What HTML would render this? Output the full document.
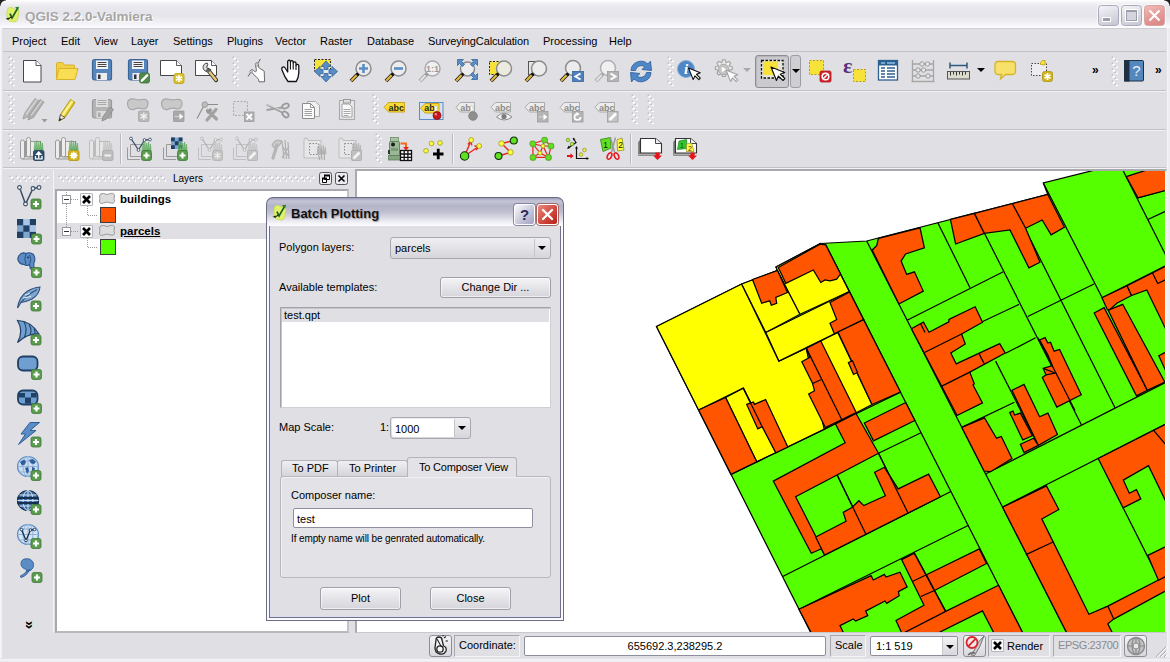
<!DOCTYPE html>
<html><head><meta charset="utf-8"><title>QGIS 2.2.0-Valmiera</title>
<style>
html,body{margin:0;padding:0;}
body{width:1170px;height:662px;overflow:hidden;background:#e0dfe3;font-family:"Liberation Sans",sans-serif;font-size:11px;color:#000;position:relative;}
.abs{position:absolute;}
div,span{box-sizing:border-box;}
#title{left:0;top:0;width:1170px;height:28px;background:linear-gradient(#ffffff 0px,#f6f6f9 2px,#e9e9ee 6px,#e4e4ea 15px,#ededf2 21px,#fbfbfd 27px);}
#title .t{left:25px;top:8.5px;font:bold 13.5px "Liberation Sans",sans-serif;color:#a6a6a6;letter-spacing:0px;text-shadow:1px 1px 0 #fff;white-space:nowrap;}
#corner{left:0;top:0;width:6px;height:6px;background:radial-gradient(circle at 6px 6px,rgba(0,0,0,0) 5px,#222 6px);}
#menubar{left:3px;top:28px;width:1163px;height:24px;background:#e1e0e4;border-top:1px solid #cfced4;border-bottom:1px solid #c2c1c7;}
.mi{position:absolute;top:35px;line-height:13px;white-space:nowrap;}
.sepH{position:absolute;left:3px;width:1163px;height:2px;border-top:1px solid #c2c1c7;border-bottom:1px solid #f2f2f5;}
.wbL{left:0;top:28px;width:3px;height:634px;background:linear-gradient(90deg,#f8f8fa,#eeeef2 2px,#d4d4da 3px);}
.wbR{left:1166px;top:28px;width:4px;height:634px;background:linear-gradient(90deg,#d0d0d6,#f4f4f7 1px,#ececf0);}
.wbB{left:0;top:658px;width:1170px;height:4px;background:linear-gradient(#d0d0d6,#f4f4f7 1px,#ececf0);}
.hv{position:absolute;width:7px;background-image:radial-gradient(circle at 2.6px 2.6px,#fff 0.9px,rgba(255,255,255,0) 1.5px),radial-gradient(circle at 5.6px 5.6px,#fff 0.9px,rgba(255,255,255,0) 1.5px),radial-gradient(circle at 1.5px 1.5px,#bdbcc4 0.7px,rgba(0,0,0,0) 1.3px),radial-gradient(circle at 4.5px 4.5px,#bdbcc4 0.7px,rgba(0,0,0,0) 1.3px);background-size:7px 6px;}
.hh{position:absolute;height:7px;background-image:radial-gradient(circle at 2.6px 2.6px,#fff 0.9px,rgba(255,255,255,0) 1.5px),radial-gradient(circle at 5.6px 5.6px,#fff 0.9px,rgba(255,255,255,0) 1.5px),radial-gradient(circle at 1.5px 1.5px,#bdbcc4 0.7px,rgba(0,0,0,0) 1.3px),radial-gradient(circle at 4.5px 4.5px,#bdbcc4 0.7px,rgba(0,0,0,0) 1.3px);background-size:6px 7px;}
.ic{position:absolute;width:24px;height:24px;overflow:visible;}
.vsep{position:absolute;width:2px;border-left:1px solid #b9b8c0;border-right:1px solid #f4f4f6;}
.more{position:absolute;font:bold 12px "Liberation Sans",sans-serif;line-height:12px;}
.arr{position:absolute;width:0;height:0;border-left:4px solid transparent;border-right:4px solid transparent;border-top:4px solid #000;}
#selbtn{left:755px;top:55px;width:34px;height:33px;border:1px solid #8e8d96;border-radius:3px;background:#cbcacf;box-shadow:inset 1px 1px 1px #b4b3ba;}
#selarr{left:790px;top:55px;width:11px;height:33px;border:1px solid #9d9ca4;border-radius:3px;background:#cfced3;}
/* layers dock */
#tree{left:55px;top:189px;width:294px;height:444px;background:#fff;border:2px solid #a9a9ad;border-right-color:#c3c3c7;border-bottom-color:#b9b9bd;}
#rowsel{left:57px;top:223px;width:291px;height:16px;background:#e0dfe3;}
.dockbtn{position:absolute;width:13px;height:13px;border:1px solid #55555c;border-radius:2.5px;background:#ebebef;}
.lname{position:absolute;font:bold 11.5px "Liberation Sans",sans-serif;white-space:nowrap;line-height:13px;}
.cb{position:absolute;width:13px;height:13px;border:1px solid #b5b4bc;background:#fbfbfc;border-radius:1px;}
.exp{position:absolute;width:9px;height:9px;border:1px solid #9b9aa3;background:#fff;}
.exp:after{content:"";position:absolute;left:1px;top:3px;width:5px;height:1px;background:#333;}
.sw{position:absolute;width:16px;height:16px;border:1px solid #3c3c3c;}
#mapframe{left:355px;top:169px;width:812px;height:464px;border:2px solid #a9a9ae;border-right:1px solid #f2f2f4;border-bottom:1px solid #c9c9cd;background:#fff;}
#map{position:absolute;left:357px;top:171px;}
#split{left:349px;top:188px;width:7px;height:444px;background:#e0dfe3;}
/* status bar */
.sframe{position:absolute;top:635px;height:22px;border:1px solid #a8a7ae;border-right-color:#f4f4f6;border-bottom-color:#f4f4f6;line-height:19px;white-space:nowrap;}
.sbtn{position:absolute;top:635px;height:22px;border:1px solid #8f8e96;border-radius:3px;background:linear-gradient(#f4f4f6,#d9d8de);}
.sedit{position:absolute;top:636px;height:20px;border:1px solid #8e8f9c;background:#fff;line-height:18px;white-space:nowrap;border-radius:2px;}
/* dialog */
#dlg{left:266px;top:197px;width:298px;height:424px;border-radius:7px 7px 0 0;background:#6c6c86;overflow:hidden;}
#dlgt{left:1px;top:1px;width:296px;height:28px;border-radius:6px 6px 0 0;background:linear-gradient(#9d9db8 0,#c5c5d6 3px,#b4b4c9 8px,#bfbfd1 14px,#dcdce6 20px,#f7f7fa 26px,#ffffff 28px);}
#dlgb{left:1px;top:29px;width:296px;height:394px;background:#fbfbff;}
#dlgi{left:2px;top:0;width:292px;height:392px;background:#e0dfe3;border:1px solid #707088;border-top:none;box-shadow:inset 1px 0 0 #dedef2,inset -1px 0 0 #dedef2,inset 0 -1px 0 #dedef2;}
#dlgt .t{left:24px;top:8px;font:bold 13px "Liberation Sans",sans-serif;color:#111;letter-spacing:0px;text-shadow:1px 1px 1px #9a9aa8;white-space:nowrap;}
.tb{position:absolute;top:6px;width:21px;height:21px;border-radius:3px;border:1px solid #fff;}
.lbl{position:absolute;white-space:nowrap;line-height:13px;}
.btn{position:absolute;border:1px solid #a09fa9;border-radius:3px;background:linear-gradient(#f5f5f7,#e6e5e9 45%,#d6d5db);text-align:center;box-shadow:inset 0 0 0 1px rgba(255,255,255,.6);}
.combo{position:absolute;border:1px solid #a9a8b0;border-radius:3px;background:linear-gradient(#efeef1,#e3e2e6 50%,#d6d5da);}
.sunk{position:absolute;border:1px solid #a3a2aa;border-right-color:#cfced4;border-bottom-color:#cfced4;background:#fff;box-shadow:inset 1px 1px 0 #c6c5cc;}
.tab{position:absolute;border:1px solid #b4b3bb;border-bottom:none;border-radius:3px 3px 0 0;}

</style></head>
<body>
<div id="title" class="abs"><div class="abs t">QGIS 2.2.0-Valmiera</div></div>
<div id="corner" class="abs"></div><div class="abs" style="right:0;top:0;width:6px;height:6px;background:radial-gradient(circle at 0 6px,rgba(0,0,0,0) 5px,#222 6px)"></div>
<svg class="abs" style="left:4px;top:5px" width="17" height="19" viewBox="2 1 19 22"><path d="M6,5 Q10,2 14,6 L17,4 L19,9 L17,19 Q14,22 10,20 Q9,21 7,19 Q4,14 5,9z" fill="#dff06a" stroke="#c4d84a" stroke-width="0.800"/><path d="M8.500,11 L11,16 L17,5.500" fill="none" stroke="#1f5f1f" stroke-width="2"/><path d="M14.500,3.500 l4.500,-0.500 l-1,4.500z" fill="#1f7f1f"/><path d="M3.500,17 l3.500,-1.500 l-0.500,3z" fill="#1f3f1f"/><path d="M6,17.500 L10,15" stroke="#111" stroke-width="1.200"/></svg>
<div class="abs" style="left:1098px;top:5px;width:21px;height:21px;border-radius:3.500px;border:1px solid #a9a9bd;background:linear-gradient(160deg,#f4f4f8,#dcdce4 50%,#c6c6d2);box-shadow:0 0 0 1px rgba(255,255,255,.7)"></div><div class="abs" style="left:1102px;top:17px;width:9px;height:5px;background:#9d9dab;border:1.500px solid #fff"></div>
<div class="abs" style="left:1121px;top:5px;width:21px;height:21px;border-radius:3.500px;border:1px solid #a9a9bd;background:linear-gradient(160deg,#f4f4f8,#dcdce4 50%,#c6c6d2);box-shadow:0 0 0 1px rgba(255,255,255,.7)"></div><div class="abs" style="left:1125px;top:9px;width:13px;height:13px;border:1.500px solid #fff;background:#d4d4dc;box-shadow:inset 0 2px 0 #9d9dab, inset 1px 0 0 #9d9dab, inset -1px 0 0 #9d9dab, inset 0 -1px 0 #9d9dab"></div>
<div class="abs" style="left:1144px;top:5px;width:21px;height:21px;border-radius:3.500px;border:1px solid #d9a3a3;background:linear-gradient(160deg,#f3bdb6,#e49a98 50%,#d98484);box-shadow:0 0 0 1px rgba(255,255,255,.7)"></div><svg class="abs" style="left:1148px;top:9px" width="13" height="13" viewBox="0 0 13 13"><path d="M1.500,1.500 L11.500,11.500 M11.500,1.500 L1.500,11.500" stroke="#fff" stroke-width="2.100" stroke-linecap="butt"/></svg>
<div id="menubar" class="abs"></div>
<span class="mi" style="left:12px">Project</span>
<span class="mi" style="left:61px">Edit</span>
<span class="mi" style="left:94px">View</span>
<span class="mi" style="left:131px">Layer</span>
<span class="mi" style="left:173px">Settings</span>
<span class="mi" style="left:227px">Plugins</span>
<span class="mi" style="left:275px">Vector</span>
<span class="mi" style="left:320px">Raster</span>
<span class="mi" style="left:367px">Database</span>
<span class="mi" style="left:428px"><span style="letter-spacing:-0.12px">SurveyingCalculation</span></span>
<span class="mi" style="left:543px">Processing</span>
<span class="mi" style="left:609px">Help</span>
<div class="abs wbL"></div><div class="abs wbR"></div><div class="abs wbB"></div>
<div class="sepH" style="top:90px"></div><div class="sepH" style="top:129px"></div><div class="sepH" style="top:167px"></div>
<div class="hv" style="left:8px;top:56px;height:30px"></div>
<div class="hv" style="left:232px;top:56px;height:30px"></div>
<div class="hv" style="left:667px;top:56px;height:30px"></div>
<div class="hv" style="left:1111px;top:56px;height:30px"></div>
<div class="hv" style="left:8px;top:94px;height:30px"></div>
<div class="hv" style="left:372px;top:94px;height:30px"></div>
<div class="hv" style="left:631px;top:94px;height:30px"></div>
<div class="hv" style="left:647px;top:94px;height:30px"></div>
<div class="hv" style="left:8px;top:133px;height:30px"></div>
<div class="hv" style="left:375px;top:133px;height:30px"></div>
<div id="selbtn" class="abs"></div><div id="selarr" class="abs"></div><div class="arr" style="left:792px;top:69px"></div>
<svg class="ic" style="left:20px;top:60px" viewBox="0 0 24 24"><path d="M3.500,0.500 h12.500 l5,5 v16.500 h-17.500z" fill="#fff" stroke="#333" stroke-width="0.900"/><path d="M16,0.500 v5 h5" fill="#fff" stroke="#333" stroke-width="0.800"/></svg>
<svg class="ic" style="left:55px;top:60px" viewBox="0 0 24 24"><path d="M1.500,19.500 V3.500 q0,-1 1,-1 h5 l2,2.500 h9 q1,0 1,1 v3" fill="#f2cf45" stroke="#d9b32c" stroke-width="1"/><path d="M1.500,19.500 L4,8.500 h19 l-3,11z" fill="#f9dd55" stroke="#d9b32c" stroke-width="1"/></svg>
<svg class="ic" style="left:90px;top:60px" viewBox="0 0 24 24"><rect x="2.500" y="-0.500" width="19" height="20.500" rx="2" fill="#5786bf" stroke="#3b6596" stroke-width="1.200"/><rect x="6" y="0.500" width="12" height="8.500" fill="#f4f4f6"/><path d="M7.500,2.500h9 M7.500,4.500h9 M7.500,6.500h9" stroke="#444" stroke-width="1"/><rect x="6.500" y="13" width="10.500" height="7" fill="#eeeef2"/><rect x="8" y="14.500" width="2.500" height="4.500" fill="#333"/></svg>
<svg class="ic" style="left:126px;top:60px" viewBox="0 0 24 24"><rect x="2.500" y="-0.500" width="19" height="20.500" rx="2" fill="#5786bf" stroke="#3b6596" stroke-width="1.200"/><rect x="6" y="0.500" width="12" height="8.500" fill="#f4f4f6"/><path d="M7.500,2.500h9 M7.500,4.500h9 M7.500,6.500h9" stroke="#444" stroke-width="1"/><rect x="6.500" y="13" width="10.500" height="7" fill="#eeeef2"/><rect x="8" y="14.500" width="2.500" height="4.500" fill="#333"/><rect x="13.500" y="13" width="10" height="10" rx="2" fill="#4f8a4a" stroke="#3c6e39" stroke-width="0.8"/><path d="M15.800,20.700 L21.200,15.300" stroke="#fff" stroke-width="2.400" stroke-linecap="round"/></svg>
<svg class="ic" style="left:160px;top:60px" viewBox="0 0 24 24"><path d="M0.500,0.500 h16 l5,5 v10 h-21z" fill="#fff" stroke="#333" stroke-width="0.900"/><path d="M16.500,0.500 v5 h5" fill="#fff" stroke="#333" stroke-width="0.800"/><rect x="14" y="13.5" width="10" height="10" rx="2" fill="#dcc32e" stroke="#b89c14" stroke-width="0.8"/><path d="M19,15 v7 M16,16.75 l6,3.500 M22,16.75 l-6,3.500" stroke="#fff" stroke-width="1.7"/></svg>
<svg class="ic" style="left:195px;top:60px" viewBox="0 0 24 24"><path d="M0.500,0.500 h16 l5,5 v10 h-21z" fill="#fff" stroke="#333" stroke-width="0.900"/><path d="M16.500,0.500 v5 h5" fill="#fff" stroke="#333" stroke-width="0.800"/><path d="M13,10 L21,20" stroke="#333" stroke-width="4.200" stroke-linecap="round"/><path d="M13.300,10.400 L20.800,19.700" stroke="#e6c876" stroke-width="2.400" stroke-linecap="round"/><path d="M12.800,3.300 a4.200,4.200 0 1 0 2.700,6.800 l-2.600,-0.500 l-1.300,-2.400 l1.500,-2.300z" fill="#dcdcdc" stroke="#333" stroke-width="0.900" transform="rotate(-8 11 7)"/><path d="M11.500,9.500 L14,12" stroke="#666" stroke-width="2.600"/></svg>
<svg class="ic" style="left:245px;top:60px" viewBox="0 0 24 24"><path d="M15.400,-1 L12.900,3.200 M3.100,16.500 L5.700,12.400" stroke="#555" stroke-width="0.900"/><path d="M11,3.200 q1.500,-0.800 2.200,0.800 l0.600,3.700 l5.400,3.400 l0.400,10.700 h-5.600 l-0.500,-2.600 l-7.400,-7.500 q-1,-1.500 0.400,-2 q1.100,-0.300 2,0.700 l2,1.500 q1,-0.600 0.900,-2 l-0.900,-4.700 q-0.200,-1.400 0.500,-2z" fill="#fff" stroke="#6a6a6a" stroke-width="1" stroke-linejoin="round"/><ellipse cx="11.800" cy="4.600" rx="1.500" ry="1.800" fill="#d0d0d0" stroke="#777" stroke-width="0.600"/><ellipse cx="6.200" cy="11.600" rx="1.500" ry="1.300" fill="#d0d0d0" stroke="#777" stroke-width="0.600"/></svg>
<svg class="ic" style="left:279px;top:60px" viewBox="0 0 24 24"><path d="M8.700,12 V1.300 q1.350,-2.200 2.700,0 V1.800 q1.400,-2.200 2.800,0 V2.800 q1.400,-2 2.800,0 V5.300 q1.500,-1.800 2.800,0.200 V13 q-0.300,4.500 -2.500,8.500 h-8.300 q-3.200,-4 -6,-11.500 q-0.700,-2.400 1,-3 q1.500,-0.400 2.500,1.500z" fill="#fff" stroke="#111" stroke-width="1.300" stroke-linejoin="round"/><path d="M11.400,1.800 V9.500 M14.200,2.800 V9.500 M17,5.300 V10" stroke="#111" stroke-width="1.100"/></svg>
<svg class="ic" style="left:313px;top:60px" viewBox="0 0 24 24"><rect x="1.500" y="-0.500" width="16" height="11.500" fill="#f7e23a" stroke="#222" stroke-width="1" stroke-dasharray="2 1.500"/><rect x="9" y="7" width="8" height="9" fill="#e8e8ee"/><path d="M13,1 l5,5.500 h-3 v3 h-4 v-3 h-3z M13,22 l5,-5.500 h-3 v-3 h-4 v3 h-3z M1.500,11.500 l5.500,-5 v3 h3 v4 h-3 v3z M24.500,11.500 l-5.500,-5 v3 h-3 v4 h3 v3z" fill="#5b8cc4" stroke="#3d6ea5" stroke-width="0.9"/></svg>
<svg class="ic" style="left:349px;top:60px" viewBox="0 0 24 24"><path d="M8.800,14 L2,21" stroke="#1a1a1a" stroke-width="3.800" stroke-linecap="butt"/><path d="M8.500,14.300 L2.300,20.700" stroke="#e3b93a" stroke-width="2.300"/><circle cx="14.5" cy="8.5" r="7.5" fill="#ececec" stroke="#8c8c8c" stroke-width="1.500"/><path d="M9.500,13.500 l-1.800,1.800" stroke="#111" stroke-width="2.800"/><path d="M10,8.500h9 M14.500,4v9" stroke="#5b8cc4" stroke-width="2.600"/></svg>
<svg class="ic" style="left:384px;top:60px" viewBox="0 0 24 24"><path d="M8.800,14 L2,21" stroke="#1a1a1a" stroke-width="3.800" stroke-linecap="butt"/><path d="M8.500,14.300 L2.300,20.700" stroke="#e3b93a" stroke-width="2.300"/><circle cx="14.5" cy="8.5" r="7.5" fill="#ececec" stroke="#8c8c8c" stroke-width="1.500"/><path d="M9.500,13.500 l-1.800,1.800" stroke="#111" stroke-width="2.800"/><path d="M10,8.500h9" stroke="#5b8cc4" stroke-width="2.600"/></svg>
<svg class="ic" style="left:418px;top:60px" viewBox="0 0 24 24"><path d="M8.800,14 L2,21" stroke="#9a9a9a" stroke-width="3.800" stroke-linecap="butt"/><path d="M8.500,14.300 L2.300,20.700" stroke="#e2e2e2" stroke-width="2.300"/><circle cx="14.5" cy="8.5" r="7.5" fill="#f0f0f0" stroke="#aaa" stroke-width="1.500"/><path d="M9.500,13.500 l-1.800,1.800" stroke="#999" stroke-width="2.800"/><text x="14.500" y="12" font-family="Liberation Sans,sans-serif" font-size="9" font-weight="bold" fill="#9a9a9a" text-anchor="middle">1:1</text></svg>
<svg class="ic" style="left:454px;top:60px" viewBox="0 0 24 24"><path d="M8.800,14 L2,21" stroke="#1a1a1a" stroke-width="3.800" stroke-linecap="butt"/><path d="M8.500,14.300 L2.300,20.700" stroke="#e3b93a" stroke-width="2.300"/><circle cx="13.5" cy="9" r="7" fill="#ececec" stroke="#8c8c8c" stroke-width="1.500"/><path d="M9.500,13.500 l-1.800,1.800" stroke="#111" stroke-width="2.800"/><path d="M3.500,-0.500 h6 l-2,2 l3,3 l-2,2 l-3,-3 l-2,2z M23.500,-0.500 h-6 l2,2 l-3,3 l2,2 l3,-3 l2,2z M23.500,19.500 h-6 l2,-2 l-3,-3 l2,-2 l3,3 l2,-2z" fill="#5b8cc4" stroke="#3d6ea5" stroke-width="0.9"/></svg>
<svg class="ic" style="left:489px;top:60px" viewBox="0 0 24 24"><rect x="0.500" y="1.500" width="13" height="13" fill="#f7e23a" stroke="#222" stroke-width="1" stroke-dasharray="2 1.500"/><path d="M8.800,14 L2,21" stroke="#1a1a1a" stroke-width="3.800" stroke-linecap="butt"/><path d="M8.500,14.300 L2.300,20.700" stroke="#e3b93a" stroke-width="2.300"/><circle cx="15" cy="8.5" r="7.5" fill="#ecebe0" stroke="#8c8c8c" stroke-width="1.500"/><path d="M9.500,13.500 l-1.800,1.800" stroke="#111" stroke-width="2.800"/></svg>
<svg class="ic" style="left:524px;top:60px" viewBox="0 0 24 24"><rect x="4.500" y="1.500" width="13.500" height="13.500" fill="#e4e4e8" stroke="#555" stroke-width="1"/><path d="M8.800,14 L2,21" stroke="#1a1a1a" stroke-width="3.800" stroke-linecap="butt"/><path d="M8.500,14.300 L2.300,20.700" stroke="#e3b93a" stroke-width="2.300"/><circle cx="15" cy="8.5" r="7.5" fill="#ececec" stroke="#8c8c8c" stroke-width="1.500"/><path d="M9.500,13.500 l-1.800,1.800" stroke="#111" stroke-width="2.800"/></svg>
<svg class="ic" style="left:559px;top:60px" viewBox="0 0 24 24"><path d="M8.800,14 L2,21" stroke="#1a1a1a" stroke-width="3.800" stroke-linecap="butt"/><path d="M8.500,14.300 L2.300,20.700" stroke="#e3b93a" stroke-width="2.300"/><circle cx="14" cy="8" r="7.5" fill="#ececec" stroke="#8c8c8c" stroke-width="1.500"/><path d="M9.500,13.500 l-1.800,1.800" stroke="#111" stroke-width="2.800"/><rect x="13.500" y="11.500" width="11" height="10" fill="#4f82bd" stroke="#35639a" stroke-width="0.8"/><path d="M21.500,13.500 L16.500,16.500 L21.500,19.500" fill="none" stroke="#fff" stroke-width="2"/></svg>
<svg class="ic" style="left:594px;top:60px" viewBox="0 0 24 24"><path d="M8.800,14 L2,21" stroke="#a0a0a0" stroke-width="3.800" stroke-linecap="butt"/><path d="M8.500,14.300 L2.300,20.700" stroke="#e2e2e2" stroke-width="2.300"/><circle cx="14" cy="8" r="7.5" fill="#f0f0f0" stroke="#b0b0b0" stroke-width="1.500"/><path d="M9.500,13.500 l-1.800,1.800" stroke="#aaa" stroke-width="2.800"/><rect x="13.500" y="11.500" width="11" height="10" fill="#b4b4b4" stroke="#9c9c9c" stroke-width="0.8"/><path d="M16.500,13.500 L21.500,16.500 L16.500,19.500" fill="none" stroke="#fff" stroke-width="2"/></svg>
<svg class="ic" style="left:629px;top:60px" viewBox="0 0 24 24"><path d="M2,10.500 a10,9.500 0 0 1 17,-6.500 l2.500,-3 l1,9.500 l-9.500,-1 l2.800,-2.800 a6,6 0 0 0 -9.300,3.800z" fill="#4f86c6" stroke="#2f64a3" stroke-width="0.9"/><path d="M22,12.500 a10,9.500 0 0 1 -17,6.500 l-2.500,3 l-1,-9.500 l9.500,1 l-2.800,2.800 a6,6 0 0 0 9.300,-3.800z" fill="#4f86c6" stroke="#2f64a3" stroke-width="0.9"/></svg>
<svg class="ic" style="left:677px;top:60px" viewBox="0 0 24 24"><circle cx="9" cy="9" r="8.500" fill="#4f86c6" stroke="#86aedb" stroke-width="1"/><text x="9" y="14" font-family="Liberation Serif,serif" font-size="15" font-style="italic" font-weight="bold" fill="#fff" text-anchor="middle">i</text><path transform="translate(11.5 8) rotate(-22)" d="M0,0 v12.500 l3,-2.800 l2.200,5 l2,-0.900 l-2.200,-4.900 h4.100z" fill="#fff" stroke="#111" stroke-width="1.100" stroke-linejoin="round"/></svg>
<svg class="ic" style="left:713px;top:60px" viewBox="0 0 24 24"><g transform="translate(-2.500 -1.500) scale(1.220)"><path d="M10,1 l2,0 l0.700,2.500 l2.300,-1.200 l1.500,1.500 l-1.200,2.300 l2.500,0.700 v2.200 l-2.500,0.700 l1.200,2.300 l-1.500,1.500 l-2.300,-1.200 l-0.700,2.500 h-2.200 l-0.700,-2.500 l-2.300,1.200 l-1.500,-1.500 l1.200,-2.300 l-2.500,-0.700 v-2.200 l2.500,-0.700 l-1.200,-2.300 l1.500,-1.500 l2.300,1.200z" fill="#e9e9e9" stroke="#a0a0a0" stroke-width="0.900"/><circle cx="10.700" cy="9" r="4.300" fill="#c4c4c4" stroke="#a0a0a0" stroke-width="0.700"/><path d="M9.200,6.800 v4.400 l3.800,-2.200z" fill="#fff"/></g><path transform="translate(13 10) rotate(-22)" d="M0,0 v12.500 l3,-2.800 l2.200,5 l2,-0.900 l-2.200,-4.900 h4.100z" fill="#fff" stroke="#a0a0a0" stroke-width="1.100" stroke-linejoin="round"/></svg>
<svg class="ic" style="left:760px;top:60px" viewBox="0 0 24 24"><rect x="1.500" y="0.500" width="21.500" height="17.500" fill="#e6e4d2" stroke="#111" stroke-width="1.300" stroke-dasharray="2.500 1.500"/><rect x="3" y="1.500" width="15" height="13.500" fill="#f7e23a"/><path transform="translate(11 7) rotate(-22)" d="M0,0 v14.500 l3.500,-3.300 l2.600,5.800 l2.400,-1.100 l-2.600,-5.700 h4.800z" fill="#fff" stroke="#111" stroke-width="1.200" stroke-linejoin="round"/></svg>
<svg class="ic" style="left:808px;top:60px" viewBox="0 0 24 24"><rect x="1.500" y="0.500" width="14" height="14" fill="#f7e23a" stroke="#b89c14" stroke-width="1" stroke-dasharray="2 1.500"/><rect x="12" y="11" width="11" height="11" rx="1.500" fill="#d8242c" stroke="#a8141c" stroke-width="0.8"/><circle cx="17.500" cy="16.500" r="3.300" fill="none" stroke="#fff" stroke-width="1.500"/><path d="M15.200,18.800 L19.800,14.200" stroke="#fff" stroke-width="1.500"/></svg>
<svg class="ic" style="left:843px;top:60px" viewBox="0 0 24 24"><text x="0" y="13" font-family="Liberation Serif,serif" font-size="22" font-weight="bold" fill="#5b2d82">ε</text><rect x="10.500" y="9.500" width="12" height="12" fill="#f7e23a" stroke="#b89c14" stroke-width="1" stroke-dasharray="2 1.500"/></svg>
<svg class="ic" style="left:877px;top:60px" viewBox="0 0 24 24"><rect x="1.500" y="0.500" width="19" height="19.500" fill="#fff" stroke="#2d5f8f" stroke-width="1.300"/><rect x="2" y="1" width="18" height="4.500" fill="#2d5f8f"/><path d="M4,3h4 M10,3h8" stroke="#8fc0e8" stroke-width="1.400"/><path d="M4,8h4 M10,8h8 M4,11h4 M10,11h8 M4,14h4 M10,14h8 M4,17h4 M10,17h8" stroke="#2d5f8f" stroke-width="1.300"/></svg>
<svg class="ic" style="left:911px;top:60px" viewBox="0 0 24 24"><path d="M1.500,0 V21 M22.500,0 V21 M0.500,21.500 h23 M1.500,4h21 M1.500,10h21 M1.500,16h21" stroke="#a6a6a6" stroke-width="1.300" fill="none"/><circle cx="11" cy="4" r="2.200" fill="#e6e6e6" stroke="#9a9a9a"/><circle cx="16.500" cy="4" r="2.200" fill="#e6e6e6" stroke="#9a9a9a"/><circle cx="7" cy="10" r="2.200" fill="#e6e6e6" stroke="#9a9a9a"/><circle cx="12.500" cy="10" r="2.200" fill="#e6e6e6" stroke="#9a9a9a"/><circle cx="7" cy="16" r="2.200" fill="#e6e6e6" stroke="#9a9a9a"/><circle cx="17" cy="16" r="2.200" fill="#e6e6e6" stroke="#9a9a9a"/></svg>
<svg class="ic" style="left:947px;top:60px" viewBox="0 0 24 24"><path d="M3,5.500 h17 M3,2.500v6 M20,2.500v6" stroke="#2d5a7f" stroke-width="1.500"/><rect x="0.500" y="11.500" width="22" height="7.500" fill="#dcdccc" stroke="#555" stroke-width="1"/><path d="M3.500,12v3.500 M6.500,12v2.500 M9.500,12v3.500 M12.500,12v2.500 M15.500,12v3.500 M18.500,12v2.500" stroke="#333" stroke-width="1"/></svg>
<svg class="ic" style="left:994px;top:60px" viewBox="0 0 24 24"><path d="M4,1.500 h14 q3.500,0 3.500,3.500 v6 q0,3.500 -3.500,3.500 h-6.500 l-5,4.500 l1,-4.500 h-3.500 q-3,0 -3,-3.500 v-6 q0,-3.500 3,-3.500z" fill="#f8e16a" stroke="#d4b52a" stroke-width="1.300"/></svg>
<svg class="ic" style="left:1031px;top:60px" viewBox="0 0 24 24"><rect x="0.500" y="3.500" width="15" height="12" fill="#ededf0" stroke="#444" stroke-width="1" stroke-dasharray="1.500 1.500"/><path d="M9.500,4.500 v-2 l2,-2 h2.500 v4.500z" fill="#f7e23a" stroke="#b89c14" stroke-width="0.8"/><rect x="11.5" y="11.5" width="10" height="10" rx="2" fill="#d0b41f" stroke="#b0950f" stroke-width="0.8"/><path d="M16.5,13 v7 M13.5,14.75 l6,3.500 M19.5,14.75 l-6,3.500" stroke="#fff" stroke-width="1.7"/></svg>
<svg class="ic" style="left:1122px;top:60px" viewBox="0 0 24 24"><rect x="2.500" y="0.500" width="19" height="20.500" rx="1" fill="#5487be" stroke="#1f2f44" stroke-width="1"/><rect x="2" y="0" width="5.500" height="21.500" fill="#1f2f44"/><text x="14.500" y="16" font-family="Liberation Sans,sans-serif" font-size="15" fill="#e8f0fa" text-anchor="middle">?</text></svg>
<div class="arr" style="left:743px;top:68px;border-top-color:#a9a9ad"></div>
<div class="arr" style="left:977px;top:68px"></div>
<div class="more" style="left:1092px;top:64px">»</div><div class="more" style="left:1155px;top:64px">»</div>
<svg class="ic" style="left:21px;top:98px" viewBox="0 0 24 24"><path d="M2,21 L3.500,15.500 L14,0.500 L18,3 L7.500,18.500z" fill="#b9b9b9" stroke="#999" stroke-width="0.8"/><path d="M7,22 L8.500,16.500 L19,1.500 L23,4 L12.500,19.500z" fill="#b0b0b0" stroke="#999" stroke-width="0.8"/><path d="M5,16.500 L16,1.500 M10,17.500 L21,2.500" stroke="#d9d9d9" stroke-width="1.200"/><path d="M20.500,21 h6 l-3,3.500z" fill="#9a9a9a"/></svg>
<svg class="ic" style="left:55px;top:98px" viewBox="0 0 24 24"><path d="M4,23 L5.500,16.500 L15.500,1.500 L20,4.500 L10,19.500z" fill="#f2dc45" stroke="#a8921a" stroke-width="0.9"/><path d="M7.500,17.500 L17.500,2.800" stroke="#fff6a8" stroke-width="1.500"/><path d="M9.500,19 L19.500,4" stroke="#c9ae22" stroke-width="1.200"/><path d="M4,23 L5.500,16.500 L10,19.500z" fill="#f0e4c4" stroke="#444" stroke-width="0.8"/><path d="M4,23 L4.700,20 L6.600,21.200z" fill="#222"/></svg>
<svg class="ic" style="left:90px;top:98px" viewBox="0 0 24 24"><rect x="2.500" y="1.500" width="19" height="18.500" rx="2" fill="#b4b4b4" stroke="#9a9a9a" stroke-width="1.200"/><rect x="6" y="0.500" width="12" height="8.500" fill="#dedede"/><path d="M7.500,2.500h9 M7.500,4.500h9 M7.500,6.500h9" stroke="#aaa" stroke-width="1"/><rect x="6.500" y="13" width="10.500" height="7" fill="#dcdcdc"/><rect x="8" y="14.500" width="2.500" height="4.500" fill="#aaa"/><path d="M12,23 L13,18.500 L20,9 L23.500,11.500 L16.500,21z" fill="#a4a4a4" stroke="#8c8c8c" stroke-width="0.8"/></svg>
<svg class="ic" style="left:126px;top:98px" viewBox="0 0 24 24"><path d="M1.500,5 Q2,0.500 8,1 Q12,2.500 16,1.500 Q22.500,0.500 22,6 Q21.500,11 17,11 Q12,9 8,11.500 Q1.500,12.500 1.500,5z" fill="#c9c9c9" stroke="#a6a6a6" stroke-width="1.200"/><rect x="12.500" y="13" width="10.500" height="10.500" rx="1.500" fill="#b9b9b9" stroke="#a6a6a6" stroke-width="0.8"/><path d="M17.800,14.500v7.500 M14.500,16.300l6.600,3.900 M21.100,16.300l-6.600,3.900" stroke="#f0f0f0" stroke-width="1.400"/></svg>
<svg class="ic" style="left:160px;top:98px" viewBox="0 0 24 24"><path d="M1.500,5 Q2,0.500 8,1 Q12,2.500 16,1.500 Q22.500,0.500 22,6 Q21.500,11 17,11 Q12,9 8,11.500 Q1.500,12.500 1.500,5z" fill="#c9c9c9" stroke="#a6a6a6" stroke-width="1.200"/><rect x="13.500" y="13" width="10.500" height="10.500" rx="0.500" fill="#a9a9a9" stroke="#999" stroke-width="0.8"/><path d="M14.500,18.200 h5 v-2.700 l4,3 l-4,3 v-2.700 h-5z" fill="#fff"/></svg>
<svg class="ic" style="left:195px;top:98px" viewBox="0 0 24 24"><path d="M10,6.500 H23 M9,7.500 L2,20.500" stroke="#8c8c8c" stroke-width="1.100"/><circle cx="9.800" cy="6.600" r="2.800" fill="#bdbdbd" stroke="#999" stroke-width="0.9"/><path d="M12.500,12.500 L21.500,21 M21,11.500 L12,22" stroke="#a2a2a2" stroke-width="3.200" stroke-linecap="round"/><path d="M11,13.500 l4.500,-3.500 l2,2.500 l-4.500,3.500z" fill="#999"/></svg>
<svg class="ic" style="left:232px;top:98px" viewBox="0 0 24 24"><rect x="1.500" y="3.500" width="14" height="14" fill="#dddce0" stroke="#aaa" stroke-width="1.100" stroke-dasharray="2 1.500"/><rect x="12.500" y="14" width="9.500" height="9.500" fill="#b0b0b0" stroke="#9c9c9c" stroke-width="0.8"/><path d="M14.500,16 l5.500,5.500 M20,16 l-5.500,5.500" stroke="#fff" stroke-width="1.900"/></svg>
<svg class="ic" style="left:266px;top:98px" viewBox="0 0 24 24"><path d="M0.500,6.500 L16,14.500 M0.500,12 L16.500,9.500" stroke="#a0a0a0" stroke-width="1.800"/><path d="M0.500,6 L15,12" stroke="#d6d6d6" stroke-width="1"/><ellipse cx="19.500" cy="8" rx="3.500" ry="2.300" fill="none" stroke="#999" stroke-width="1.700" transform="rotate(-25 19.500 8)"/><ellipse cx="19.500" cy="16.500" rx="3.500" ry="2.300" fill="none" stroke="#999" stroke-width="1.700" transform="rotate(40 19.500 16.500)"/></svg>
<svg class="ic" style="left:299px;top:98px" viewBox="0 0 24 24"><path d="M8.500,3.500 h8 l4,4 v11 h-12z" fill="#f0f0f0" stroke="#aaa" stroke-width="1"/><path d="M3.500,5.500 h8 l4,4 v11 h-12z" fill="#fbfbfb" stroke="#8c8c8c" stroke-width="1"/><path d="M11.500,5.500 v4 h4" fill="none" stroke="#8c8c8c" stroke-width="0.900"/><path d="M5.500,11.500h7.500 M5.500,13.500h7.500 M5.500,15.500h7.500 M5.500,17.500h7.500" stroke="#a0a0a0" stroke-width="1"/></svg>
<svg class="ic" style="left:335px;top:98px" viewBox="0 0 24 24"><rect x="4.500" y="2.500" width="15" height="19" fill="#e8e8e8" stroke="#aaa" stroke-width="1.100"/><rect x="8.500" y="1.500" width="7" height="3.500" fill="#ddd" stroke="#999" stroke-width="1"/><path d="M7,6 h7 l3,3 v10 h-10z" fill="#fafafa" stroke="#999" stroke-width="0.9"/><path d="M8.500,11.500h7 M8.500,13.500h7 M8.500,15.500h7 M8.500,17.500h5" stroke="#aaa" stroke-width="1"/></svg>
<svg class="ic" style="left:383px;top:98px" viewBox="0 0 24 24"><path d="M5.500,4.500 h16 v9.500 h-16 l-4.500,-4.750z" fill="#f7dc38" stroke="#c9a51e" stroke-width="1"/><text x="13.2" y="12.500" font-family="Liberation Sans,sans-serif" font-size="9" font-weight="bold" fill="#2a2a10" text-anchor="middle">abc</text></svg>
<svg class="ic" style="left:419px;top:98px" viewBox="0 0 24 24"><rect x="0.500" y="4.500" width="23.500" height="17" fill="#d6e2f2" stroke="#5b8cc4" stroke-width="1"/><path d="M6,5.500 h14 v9.500 h-14 l-4.500,-4.750z" fill="#f7dc38" stroke="#c9a51e" stroke-width="1"/><text x="10.5" y="13.200" font-family="Liberation Sans,sans-serif" font-size="9" font-weight="bold" fill="#2a2a10" text-anchor="middle">ab</text><path d="M15.500,8 v5 h2.500 v-5z" fill="#fff" stroke="#bbb" stroke-width="0.600"/><circle cx="18" cy="17.500" r="4" fill="#c4181c" stroke="#8e0e10" stroke-width="0.800"/><circle cx="16.800" cy="16.200" r="1.200" fill="#f08a8a"/></svg>
<svg class="ic" style="left:455px;top:98px" viewBox="0 0 24 24"><path d="M5.500,4.500 h14 v9.500 h-14 l-4.500,-4.750z" fill="#ececec" stroke="#aaaaaa" stroke-width="1"/><text x="10.5" y="12.500" font-family="Liberation Sans,sans-serif" font-size="9" font-weight="bold" fill="#8a8a8a" text-anchor="middle">ab</text><path d="M15.500,8 v5 h2.500 v-5z" fill="#fff" stroke="#bbb" stroke-width="0.600"/><circle cx="18" cy="18" r="4.300" fill="#8f8f8f" stroke="#7c7c7c" stroke-width="0.800"/></svg>
<svg class="ic" style="left:490px;top:98px" viewBox="0 0 24 24"><path d="M5.500,4.500 h15 v9.500 h-15 l-4.500,-4.750z" fill="#ececec" stroke="#aaaaaa" stroke-width="1"/><text x="12.7" y="12.500" font-family="Liberation Sans,sans-serif" font-size="9" font-weight="bold" fill="#8a8a8a" text-anchor="middle">abc</text><path d="M6.500,19 Q14,11.500 22,19 Q14,25 6.500,19z" fill="#f2f2f2" stroke="#8c8c8c" stroke-width="1"/><circle cx="14" cy="18.500" r="2.600" fill="#7c7c7c"/></svg>
<svg class="ic" style="left:524px;top:98px" viewBox="0 0 24 24"><path d="M5.500,4.500 h15 v9.500 h-15 l-4.500,-4.750z" fill="#ececec" stroke="#aaaaaa" stroke-width="1"/><text x="12.7" y="12.500" font-family="Liberation Sans,sans-serif" font-size="9" font-weight="bold" fill="#8a8a8a" text-anchor="middle">abc</text><rect x="13.500" y="13.500" width="10.500" height="10.500" fill="#b4b4b4" stroke="#9c9c9c" stroke-width="0.800"/><path d="M14.500,18.700 h5 v-2.700 l4,3 l-4,3 v-2.700 h-5z" fill="#fff"/></svg>
<svg class="ic" style="left:559px;top:98px" viewBox="0 0 24 24"><path d="M5.500,4.500 h15 v9.500 h-15 l-4.500,-4.750z" fill="#ececec" stroke="#aaaaaa" stroke-width="1"/><text x="12.7" y="12.500" font-family="Liberation Sans,sans-serif" font-size="9" font-weight="bold" fill="#8a8a8a" text-anchor="middle">abc</text><rect x="13.500" y="13.500" width="10.500" height="10.500" fill="#b4b4b4" stroke="#9c9c9c" stroke-width="0.800"/><path d="M21.500,19 a3,3 0 1 1 -3,-3" fill="none" stroke="#fff" stroke-width="1.700"/><path d="M17.500,13.800 l3,2.200 l-3,2.200z" fill="#fff"/></svg>
<svg class="ic" style="left:594px;top:98px" viewBox="0 0 24 24"><path d="M5.500,4.500 h15 v9.500 h-15 l-4.500,-4.750z" fill="#ececec" stroke="#aaaaaa" stroke-width="1"/><text x="12.7" y="12.500" font-family="Liberation Sans,sans-serif" font-size="9" font-weight="bold" fill="#8a8a8a" text-anchor="middle">abc</text><rect x="13.500" y="13.500" width="10.500" height="10.500" fill="#c4c4c4" stroke="#9c9c9c" stroke-width="0.800"/><path d="M15.500,22 L22,15.500" stroke="#fff" stroke-width="2.800"/></svg>
<svg class="ic" style="left:20px;top:137px" viewBox="0 0 24 24"><rect x="5.500" y="4.500" width="15" height="15" fill="#ececec" stroke="#9a9a9a" stroke-width="1"/><path d="M0.500,5 q0,-2 2,-2 q2,0 2,2 V20 q0,2 -2,2 q-2,0 -2,-2z" fill="#ececec" stroke="#9a9a9a" stroke-width="1"/><path d="M6.500,2.500 q0,-2 2,-2 q2,0 2,2 V18 q0,2 -2,2 q-2,0 -2,-2z" fill="#ececec" stroke="#9a9a9a" stroke-width="1"/><path d="M2.500,22 H13 M8.500,20 H14" stroke="#9a9a9a" stroke-width="1"/><path d="M14,13 l1,-8 l1,8 l0.800,-9.500 l1,9.500 l1,-8 l1,8 l0.800,-9 l1,9 l0.800,-7 l0.800,7z" fill="#7fc47f" stroke="#4f9a4f" stroke-width="0.500"/><rect x="13.500" y="13.500" width="10.500" height="10" rx="1.500" fill="#2d4f6c" stroke="#1f3a52" stroke-width="0.800"/><path d="M15.500,19 v2.800 h6.500 v-2.800" fill="none" stroke="#fff" stroke-width="1.300"/><path d="M18.750,21 v-4 M16.700,17.300 l2.050,-2.300 l2.050,2.300z" stroke="#fff" stroke-width="1.300" fill="#fff"/></svg>
<svg class="ic" style="left:55px;top:137px" viewBox="0 0 24 24"><rect x="5.500" y="4.500" width="15" height="15" fill="#ececec" stroke="#9a9a9a" stroke-width="1"/><path d="M0.500,5 q0,-2 2,-2 q2,0 2,2 V20 q0,2 -2,2 q-2,0 -2,-2z" fill="#ececec" stroke="#9a9a9a" stroke-width="1"/><path d="M6.500,2.500 q0,-2 2,-2 q2,0 2,2 V18 q0,2 -2,2 q-2,0 -2,-2z" fill="#ececec" stroke="#9a9a9a" stroke-width="1"/><path d="M2.500,22 H13 M8.500,20 H14" stroke="#9a9a9a" stroke-width="1"/><path d="M14,13 l1,-8 l1,8 l0.800,-9.500 l1,9.500 l1,-8 l1,8 l0.800,-9 l1,9 l0.800,-7 l0.800,7z" fill="#7fc47f" stroke="#4f9a4f" stroke-width="0.500"/><rect x="13.500" y="13.500" width="10.500" height="10" rx="1.500" fill="#d3b21c" stroke="#b0950f" stroke-width="0.800"/><circle cx="18.750" cy="18.500" r="2.300" fill="none" stroke="#fff" stroke-width="1.400"/><path d="M18.750,14.500v8 M14.750,18.500h8 M16,15.800l5.500,5.400 M21.500,15.800l-5.500,5.400" stroke="#fff" stroke-width="1.100"/></svg>
<svg class="ic" style="left:89px;top:137px" viewBox="0 0 24 24"><rect x="5.500" y="4.500" width="15" height="15" fill="#e6e6e6" stroke="#bcbcbc" stroke-width="1"/><path d="M0.500,5 q0,-2 2,-2 q2,0 2,2 V20 q0,2 -2,2 q-2,0 -2,-2z" fill="#e6e6e6" stroke="#bcbcbc" stroke-width="1"/><path d="M6.500,2.500 q0,-2 2,-2 q2,0 2,2 V18 q0,2 -2,2 q-2,0 -2,-2z" fill="#e6e6e6" stroke="#bcbcbc" stroke-width="1"/><path d="M2.500,22 H13 M8.500,20 H14" stroke="#bcbcbc" stroke-width="1"/><path d="M14,13 l1,-8 l1,8 l0.800,-9.500 l1,9.500 l1,-8 l1,8 l0.800,-9 l1,9 l0.800,-7 l0.800,7z" fill="#d0d0d0" stroke="#bdbdbd" stroke-width="0.500"/><rect x="13.500" y="13.500" width="10.500" height="10" rx="1.500" fill="#bdbdbd" stroke="#aaa" stroke-width="0.800"/><path d="M15.500,18.500h6.500" stroke="#f0f0f0" stroke-width="2"/></svg>
<svg class="ic" style="left:127px;top:137px" viewBox="0 0 24 24"><path d="M0.500,10.500 V22.500 H13 M3.500,7.500 V19.500 H14" fill="none" stroke="#9a9a9a" stroke-width="1"/><path d="M3.500,7.500 H17" stroke="#9a9a9a" stroke-width="1"/><path d="M4,1.500 L11.500,13 L17.500,3 L23,2.500" fill="none" stroke="#3c5068" stroke-width="1.300"/><circle cx="4" cy="1.5" r="1.400" fill="#fff" stroke="#3c5068" stroke-width="0.900"/><circle cx="11.5" cy="13" r="1.400" fill="#fff" stroke="#3c5068" stroke-width="0.900"/><circle cx="17.5" cy="3" r="1.400" fill="#fff" stroke="#3c5068" stroke-width="0.900"/><circle cx="23" cy="2.5" r="1.400" fill="#fff" stroke="#3c5068" stroke-width="0.900"/><path d="M15,14 l1,-8 l1,8 l0.800,-9.500 l1,9.500 l1,-8 l1,8 l0.800,-9 l1,9 l0.800,-7 l0.800,7z" fill="#7fc47f" stroke="#4f9a4f" stroke-width="0.500"/><rect x="14.5" y="13.5" width="10" height="10" rx="2" fill="#5a9b4e" stroke="#3f7a36" stroke-width="0.8"/><path d="M16.5,18.5 h6 M19.5,15.5 v6" stroke="#fff" stroke-width="2.2"/></svg>
<svg class="ic" style="left:163px;top:137px" viewBox="0 0 24 24"><path d="M0.500,10.500 V22.500 H13 M3.500,7.500 V19.500 H14" fill="none" stroke="#9a9a9a" stroke-width="1"/><path d="M3.500,7.500 H17" stroke="#9a9a9a" stroke-width="1"/><rect x="8" y="0.5" width="11.500" height="11.500" fill="#7ea6cf"/><path d="M8,0.5 h3.830 v3.830 h-3.830z M15.66,0.5 h3.830 v3.830 h-3.830z M11.83,4.33 h3.830 v3.830 h-3.830z M8,8.16 h3.830 v3.830 h-3.830z M15.66,8.16 h3.830 v3.830 h-3.830z" fill="#1f3f64"/><path d="M15,14 l1,-8 l1,8 l0.800,-9.500 l1,9.500 l1,-8 l1,8 l0.800,-9 l1,9 l0.800,-7 l0.800,7z" fill="#7fc47f" stroke="#4f9a4f" stroke-width="0.500"/><rect x="14.5" y="13.5" width="10" height="10" rx="2" fill="#5a9b4e" stroke="#3f7a36" stroke-width="0.8"/><path d="M16.5,18.5 h6 M19.5,15.5 v6" stroke="#fff" stroke-width="2.2"/></svg>
<svg class="ic" style="left:198px;top:137px" viewBox="0 0 24 24"><path d="M0.500,10.500 V22.500 H13 M3.500,7.500 V19.500 H14" fill="none" stroke="#c0c0c0" stroke-width="1"/><path d="M3.500,7.500 H17" stroke="#c0c0c0" stroke-width="1"/><path d="M4,1.500 L11.500,13 L17.500,3 L23,2.500" fill="none" stroke="#b4b4b4" stroke-width="1.300"/><circle cx="4" cy="1.5" r="1.400" fill="#f0f0f0" stroke="#b4b4b4" stroke-width="0.900"/><circle cx="11.5" cy="13" r="1.400" fill="#f0f0f0" stroke="#b4b4b4" stroke-width="0.900"/><circle cx="17.5" cy="3" r="1.400" fill="#f0f0f0" stroke="#b4b4b4" stroke-width="0.900"/><circle cx="23" cy="2.5" r="1.400" fill="#f0f0f0" stroke="#b4b4b4" stroke-width="0.900"/><path d="M15,14 l1,-8 l1,8 l0.800,-9.500 l1,9.500 l1,-8 l1,8 l0.800,-9 l1,9 l0.800,-7 l0.800,7z" fill="#d0d0d0" stroke="#bdbdbd" stroke-width="0.500"/><rect x="14.500" y="13.500" width="10" height="10" rx="2" fill="#c4c4c4" stroke="#b0b0b0" stroke-width="0.800"/><path d="M19.500,15v7 M16.500,16.750l6,3.500 M22.500,16.750l-6,3.500" stroke="#eee" stroke-width="1.300"/></svg>
<svg class="ic" style="left:233px;top:137px" viewBox="0 0 24 24"><path d="M0.500,10.500 V22.500 H13 M3.500,7.500 V19.500 H14" fill="none" stroke="#c0c0c0" stroke-width="1"/><path d="M3.500,7.500 H17" stroke="#c0c0c0" stroke-width="1"/><path d="M4,1.500 L11.500,13 L17.500,3 L23,2.500" fill="none" stroke="#b4b4b4" stroke-width="1.300"/><circle cx="4" cy="1.5" r="1.400" fill="#f0f0f0" stroke="#b4b4b4" stroke-width="0.900"/><circle cx="11.5" cy="13" r="1.400" fill="#f0f0f0" stroke="#b4b4b4" stroke-width="0.900"/><circle cx="17.5" cy="3" r="1.400" fill="#f0f0f0" stroke="#b4b4b4" stroke-width="0.900"/><circle cx="23" cy="2.5" r="1.400" fill="#f0f0f0" stroke="#b4b4b4" stroke-width="0.900"/><path d="M15,14 l1,-8 l1,8 l0.800,-9.500 l1,9.500 l1,-8 l1,8 l0.800,-9 l1,9 l0.800,-7 l0.800,7z" fill="#d0d0d0" stroke="#bdbdbd" stroke-width="0.500"/><rect x="14.500" y="13.500" width="10" height="10" rx="1" fill="#c4c4c4" stroke="#b0b0b0" stroke-width="0.800"/><path d="M16.500,21.500 L22.500,15.500" stroke="#f4f4f4" stroke-width="2.600"/></svg>
<svg class="ic" style="left:269px;top:137px" viewBox="0 0 24 24"><path d="M3,8 Q6,1 13,4 L10,9 Q7,7 5,11z" fill="#c9c9c9" stroke="#aaa" stroke-width="1"/><path d="M8,8 L4,21" stroke="#b4b4b4" stroke-width="3.200" stroke-linecap="round"/><path d="M13,4 l2,18 M16,3 l1.500,19 M19,5 l1,17 M14,10 l6,10 M20,9 l-7,12" stroke="#b0b0b0" stroke-width="1.200"/></svg>
<svg class="ic" style="left:303px;top:137px" viewBox="0 0 24 24"><path d="M1,3 q0,-2 2,-2 q2,0 2,2 V19" fill="none" stroke="#bdbdbd" stroke-width="1"/><path d="M1,3 V21 H18 V3.500 H5" fill="#e6e6e8" stroke="#bdbdbd" stroke-width="1"/><rect x="6.500" y="6.500" width="9" height="11" fill="none" stroke="#8c8c8c" stroke-width="1" stroke-dasharray="1.500 1.500"/><path d="M14,17 l1,-8 l1,8 l0.800,-9.500 l1,9.500 l1,-8 l1,8 l0.800,-9 l1,9 l0.800,-7 l0.800,7z" fill="#c4c4c4" stroke="#a9a9a9" stroke-width="0.500"/><path d="M15,12 l1.500,11 M18,11 l1,12 M21,13 l0.500,10" stroke="#aaa" stroke-width="1.100"/></svg>
<svg class="ic" style="left:338px;top:137px" viewBox="0 0 24 24"><path d="M1,3 q0,-2 2,-2 q2,0 2,2 V19" fill="none" stroke="#bdbdbd" stroke-width="1"/><path d="M1,3 V21 H18 V3.500 H5" fill="#e6e6e8" stroke="#bdbdbd" stroke-width="1"/><rect x="6.500" y="6.500" width="9" height="11" fill="none" stroke="#8c8c8c" stroke-width="1" stroke-dasharray="1.500 1.500"/><path d="M14,15 l1,-8 l1,8 l0.800,-9.500 l1,9.500 l1,-8 l1,8 l0.800,-9 l1,9 l0.800,-7 l0.800,7z" fill="#c4c4c4" stroke="#a9a9a9" stroke-width="0.500"/><rect x="13.500" y="13.500" width="10" height="10" rx="1" fill="#c0c0c0" stroke="#aaa" stroke-width="0.800"/><path d="M15.500,21.500 L21.500,15.500" stroke="#f4f4f4" stroke-width="2.600"/></svg>
<svg class="ic" style="left:388px;top:137px" viewBox="0 0 24 24"><rect x="2.500" y="0.500" width="8" height="4" fill="#a9c2a5" stroke="#6f8f6b" stroke-width="0.800"/><rect x="1.500" y="4.500" width="10" height="14" rx="1" fill="#9ab896" stroke="#5f7f5b" stroke-width="0.900"/><circle cx="5" cy="7.500" r="2" fill="#1c1c1c"/><rect x="3" y="11" width="7" height="3" fill="#7c9c78"/><rect x="0.500" y="18.500" width="12" height="4.500" fill="#86a482" stroke="#5f7f5b" stroke-width="0.800"/><rect x="0" y="13" width="2" height="4" fill="#333"/><path d="M12.500,6.500 h5.500 v4" fill="none" stroke="#f26a1b" stroke-width="2"/><path d="M15,10 h6 l-3,3.500z" fill="#e8241c"/><rect x="12.500" y="13.500" width="11" height="10" fill="#fff" stroke="#111" stroke-width="1.300"/><path d="M12.500,17h11 M12.500,20.300h11 M16.200,13.500v10 M19.900,13.500v10" stroke="#111" stroke-width="1.300"/></svg>
<svg class="ic" style="left:422px;top:137px" viewBox="0 0 24 24"><circle cx="9.5" cy="6.5" r="2.3" fill="#ffff3c" stroke="#9a9a1a" stroke-width="0.800"/><circle cx="18" cy="6" r="2.3" fill="#ffff3c" stroke="#9a9a1a" stroke-width="0.800"/><circle cx="4" cy="13.8" r="2.3" fill="#ffff3c" stroke="#9a9a1a" stroke-width="0.800"/><path d="M11,17h10.500 M16.250,11.800v10.500" stroke="#000" stroke-width="2.800"/></svg>
<svg class="ic" style="left:460px;top:137px" viewBox="0 0 24 24"><path d="M4.600,19 L10.500,5 M4.600,19 L18,10" stroke="#e8241c" stroke-width="1.400"/><path d="M8,7.500 l2.800,-3.700 l1,4.500 M14.500,9 l4.500,0.500 l-3,3.500" fill="none" stroke="#e8241c" stroke-width="1.400"/><circle cx="4.6" cy="19" r="4.2" fill="#5fe11f" stroke="#0f2f0f" stroke-width="1.100"/><circle cx="11.2" cy="3" r="2.4" fill="#ffff3c" stroke="#9a9a1a" stroke-width="0.800"/><circle cx="19.2" cy="9" r="2.4" fill="#ffff3c" stroke="#9a9a1a" stroke-width="0.800"/></svg>
<svg class="ic" style="left:495px;top:137px" viewBox="0 0 24 24"><path d="M3.500,19 L15.500,15.300 L6.500,6.500 L18.800,3.500" fill="none" stroke="#e8241c" stroke-width="1.400"/><circle cx="18.8" cy="3.5" r="3.5" fill="#5fe11f" stroke="#0f2f0f" stroke-width="1.100"/><circle cx="3.5" cy="19" r="3.5" fill="#5fe11f" stroke="#0f2f0f" stroke-width="1.100"/><circle cx="6.5" cy="6.5" r="2.7" fill="#ffff3c" stroke="#9a9a1a" stroke-width="0.800"/><circle cx="15.5" cy="15.3" r="2.7" fill="#ffff3c" stroke="#9a9a1a" stroke-width="0.800"/></svg>
<svg class="ic" style="left:530px;top:137px" viewBox="0 0 24 24"><path d="M2.800,6.800 L14.600,3 L21,9 L18.500,20.400 L3,20.400z M2.800,6.800 L13,9 L21,9 M14.600,3 L13,9 L10,16 L3,20.400 M10,16 L18.500,20.400 M13,9 L18.500,20.400 M2.800,6.800 L10,16" fill="none" stroke="#e8241c" stroke-width="1.200"/><circle cx="2.8" cy="6.8" r="2.8" fill="#5fe11f" stroke="#5fae2f" stroke-width="1.100"/><circle cx="14.6" cy="3" r="2.8" fill="#5fe11f" stroke="#5fae2f" stroke-width="1.100"/><circle cx="21" cy="9" r="2.8" fill="#5fe11f" stroke="#5fae2f" stroke-width="1.100"/><circle cx="18.5" cy="20.4" r="2.8" fill="#5fe11f" stroke="#5fae2f" stroke-width="1.100"/><circle cx="3" cy="20.4" r="2.8" fill="#5fe11f" stroke="#5fae2f" stroke-width="1.100"/><circle cx="13" cy="9" r="2" fill="#ffff3c" stroke="#9a9a1a" stroke-width="0.800"/><circle cx="10" cy="16" r="2" fill="#ffff3c" stroke="#9a9a1a" stroke-width="0.800"/></svg>
<svg class="ic" style="left:566px;top:137px" viewBox="0 0 24 24"><path d="M1.500,11.500 L10,5.500 L7,1" fill="none" stroke="#111" stroke-width="1.200"/><path d="M1.500,11.500 l1,-3 l2,2.500z M7,1 l2.500,1 l-2,1.500z" fill="#111"/><path d="M10.500,10.500 V21.500 H21.500" fill="none" stroke="#111" stroke-width="1.200"/><path d="M10.500,9 l-1.500,2.500 h3z M23,21.500 l-2.500,-1.500 v3z" fill="#111"/><circle cx="2" cy="3" r="1.800" fill="#b4e84c" stroke="#5f8f1f" stroke-width="0.700"/><circle cx="6" cy="7" r="1.800" fill="#b4e84c" stroke="#5f8f1f" stroke-width="0.700"/><circle cx="18.500" cy="13" r="1.800" fill="#e8f04c" stroke="#8f8f1f" stroke-width="0.700"/><circle cx="15" cy="17.500" r="1.800" fill="#e8f04c" stroke="#8f8f1f" stroke-width="0.700"/><path d="M1,18 h3.500 v-1.800 l3,2.800 l-3,2.800 v-1.800 h-3.500z" fill="#e8141c"/></svg>
<svg class="ic" style="left:600px;top:137px" viewBox="0 0 24 24"><path d="M0.500,2.500 L10.500,0.500 L11,11 L3,14.500z" fill="#5fe11f" stroke="#2f7f0f" stroke-width="0.800"/><path d="M17,3 L22,1 L24,13 L17.500,14z" fill="#ffff3c" stroke="#8f8f1f" stroke-width="0.800"/><text x="5.500" y="10.500" font-family="Liberation Sans,sans-serif" font-size="8.500" fill="#111" text-anchor="middle">1</text><text x="20.500" y="11" font-family="Liberation Sans,sans-serif" font-size="8.500" fill="#111" text-anchor="middle">2</text><path d="M15.500,0.500 L11.500,15 M10.500,1 L14.500,15" stroke="#9a9a9a" stroke-width="1.500"/><ellipse cx="9.500" cy="19" rx="2" ry="3.500" fill="none" stroke="#e8141c" stroke-width="1.500" transform="rotate(25 9.500 19)"/><ellipse cx="16.500" cy="19" rx="2" ry="3.500" fill="none" stroke="#e8141c" stroke-width="1.500" transform="rotate(-25 16.500 19)"/></svg>
<svg class="ic" style="left:638px;top:137px" viewBox="0 0 24 24"><path d="M0.500,4.500 V18.500 H21" fill="none" stroke="#8c8c8c" stroke-width="1"/><path d="M1.500,3.500 V17 H22" fill="none" stroke="#777" stroke-width="1"/><path d="M2.500,1.500 h15 l6,5 v9.500 h-21z" fill="#fff" stroke="#333" stroke-width="1.100"/><path d="M17.500,1.500 v5 h6" fill="#f0f0f0" stroke="#333" stroke-width="0.900"/><path d="M17.500,15.500 h4 v3 h2.500 l-4.500,4.500 l-4.500,-4.500 h2.500z" fill="#e8141c"/></svg>
<svg class="ic" style="left:673px;top:137px" viewBox="0 0 24 24"><path d="M0.500,4.500 V18.500 H21" fill="none" stroke="#8c8c8c" stroke-width="1"/><path d="M1.500,3.500 V17 H22" fill="none" stroke="#777" stroke-width="1"/><path d="M2.500,1.500 h15 l6,5 v9.500 h-21z" fill="#fff" stroke="#333" stroke-width="1.100"/><path d="M17.500,1.500 v5 h6" fill="#f0f0f0" stroke="#333" stroke-width="0.900"/><path d="M6,4 L13.500,2.500 L14,11.500 L4.500,12.500z" fill="#2fc52f" stroke="#1f7f1f" stroke-width="0.700"/><path d="M13.500,7 L18.500,6 L21,14.500 L13.500,14.500z" fill="#ffff3c" stroke="#8f8f1f" stroke-width="0.700"/><text x="9" y="10.500" font-family="Liberation Sans,sans-serif" font-size="7" fill="#115511" text-anchor="middle">1</text><text x="17" y="13.500" font-family="Liberation Sans,sans-serif" font-size="7" fill="#333" text-anchor="middle">2</text><path d="M17.500,15.500 h4 v3 h2.500 l-4.500,4.500 l-4.500,-4.500 h2.500z" fill="#e8141c"/></svg>
<div class="vsep" style="left:120px;top:134px;height:30px"></div><div class="vsep" style="left:452px;top:134px;height:30px"></div><div class="vsep" style="left:630px;top:134px;height:30px"></div>
<div class="hh" style="left:9px;top:175px;width:40px"></div>
<svg class="ic" style="left:17px;top:184px" viewBox="0 0 24 24"><path d="M2.500,3.500 L8.500,20 L16,4.500 L22,3.500" fill="none" stroke="#3c5068" stroke-width="1.500"/><circle cx="2.5" cy="3.5" r="1.900" fill="#f2f2f6" stroke="#3c5068" stroke-width="1.100"/><circle cx="8.5" cy="20" r="1.900" fill="#f2f2f6" stroke="#3c5068" stroke-width="1.100"/><circle cx="16" cy="4.5" r="1.900" fill="#f2f2f6" stroke="#3c5068" stroke-width="1.100"/><circle cx="22" cy="3.5" r="1.900" fill="#f2f2f6" stroke="#3c5068" stroke-width="1.100"/><rect x="14" y="15" width="10" height="10" rx="2" fill="#5a9b4e" stroke="#3f7a36" stroke-width="0.8"/><path d="M16,20 h6 M19,17 v6" stroke="#fff" stroke-width="2.2"/></svg>
<svg class="ic" style="left:17px;top:218px" viewBox="0 0 24 24"><rect x="0" y="1" width="19" height="19" fill="#7ea6cf"/><path d="M0,1 h6.33333 v6.33333 h-6.33333z M12.6667,1 h6.33333 v6.33333 h-6.33333z M6.33333,7.33333 h6.33333 v6.33333 h-6.33333z M0,13.6667 h6.33333 v6.33333 h-6.33333z M12.6667,13.6667 h6.33333 v6.33333 h-6.33333z" fill="#1f3f64"/><path d="M6.33333,1 h6.33333 v6.33333 h-6.33333z M12.6667,7.33333 h6.33333 v6.33333 h-6.33333z" fill="#a9c4e4"/><rect x="14.5" y="16" width="10" height="10" rx="2" fill="#5a9b4e" stroke="#3f7a36" stroke-width="0.8"/><path d="M16.5,21 h6 M19.5,18 v6" stroke="#fff" stroke-width="2.2"/></svg>
<svg class="ic" style="left:17px;top:252px" viewBox="0 0 24 24"><path d="M2,3.500 Q5,-0.500 9,1.500 Q13,-0.500 16.500,2.500 Q19,7 16.800,11.500 L17,16.500 Q15.500,19 13.200,16.500 L12.500,12.500 Q10,14.500 7,12.500 Q2.500,12.500 1,8 Q0.500,5.500 2,3.500z" fill="#5b8cc4" stroke="#2b5286" stroke-width="1.100"/><path d="M9,2 Q6.500,7 9,12.500 M12.500,3 Q15,7 12.800,11.500 M13.200,16.500 q1,-1.500 2.500,-1" fill="none" stroke="#2b5286" stroke-width="1"/><circle cx="11" cy="5.500" r="0.900" fill="#16304f"/><rect x="14.5" y="15.5" width="10" height="10" rx="2" fill="#5a9b4e" stroke="#3f7a36" stroke-width="0.8"/><path d="M16.5,20.5 h6 M19.5,17.5 v6" stroke="#fff" stroke-width="2.2"/></svg>
<svg class="ic" style="left:17px;top:286px" viewBox="0 0 24 24"><path d="M0.500,22 Q2,11 10,5.500 Q16,1.500 23,1 Q22,9 15,13 Q9,16 3.500,16.500" fill="#7ea6cf" stroke="#2d4f7c" stroke-width="1.100"/><path d="M0.500,22 Q6,11 20,3.500" fill="none" stroke="#2d4f7c" stroke-width="1.100"/><path d="M8,9 L13,7.500 M6,12 L14,10.500" stroke="#dfeaf6" stroke-width="1"/><rect x="14" y="15" width="10" height="10" rx="2" fill="#5a9b4e" stroke="#3f7a36" stroke-width="0.8"/><path d="M16,20 h6 M19,17 v6" stroke="#fff" stroke-width="2.2"/></svg>
<svg class="ic" style="left:17px;top:320px" viewBox="0 0 24 24"><path d="M0.500,0.500 Q14,1 22,14 Q11,13 0.500,22.500 Q7,11 0.500,0.500z" fill="#6f9fd0" stroke="#1f3f64" stroke-width="1.200"/><path d="M7,2 Q11,9 7.500,17 M12,4.500 Q15.500,10 13,14.500 M17,8.500 Q18.500,11.500 18,13.500" fill="none" stroke="#1f3f64" stroke-width="1.100"/><rect x="14" y="15" width="10" height="10" rx="2" fill="#5a9b4e" stroke="#3f7a36" stroke-width="0.8"/><path d="M16,20 h6 M19,17 v6" stroke="#fff" stroke-width="2.2"/></svg>
<svg class="ic" style="left:17px;top:354px" viewBox="0 0 24 24"><rect x="1" y="2.500" width="19.500" height="14" rx="5" fill="#6f9fd0" stroke="#1f3f64" stroke-width="1.800"/><rect x="14.5" y="15.5" width="10" height="10" rx="2" fill="#5a9b4e" stroke="#3f7a36" stroke-width="0.8"/><path d="M16.5,20.5 h6 M19.5,17.5 v6" stroke="#fff" stroke-width="2.2"/></svg>
<svg class="ic" style="left:17px;top:388px" viewBox="0 0 24 24"><rect x="1" y="2.500" width="19.500" height="14" rx="5" fill="#6f9fd0" stroke="#1f3f64" stroke-width="1.800"/><path d="M2,5 h6 v4.500 h-6z M14,5 h5.500 v4.500 h-5.500z M8,9.500 h6 v6 h-6z" fill="#1f3f64"/><rect x="14.5" y="15.5" width="10" height="10" rx="2" fill="#5a9b4e" stroke="#3f7a36" stroke-width="0.8"/><path d="M16.5,20.5 h6 M19.5,17.5 v6" stroke="#fff" stroke-width="2.2"/></svg>
<svg class="ic" style="left:17px;top:422px" viewBox="0 0 24 24"><path d="M13,0.500 L22.500,0.500 L13,8.500 L19,8.500 L1.500,22.500 L8.500,12 L4,12z" fill="#5b8cc4" stroke="#2f5f9a" stroke-width="1"/><rect x="14" y="15" width="10" height="10" rx="2" fill="#5a9b4e" stroke="#3f7a36" stroke-width="0.8"/><path d="M16,20 h6 M19,17 v6" stroke="#fff" stroke-width="2.2"/></svg>
<svg class="ic" style="left:17px;top:456px" viewBox="0 0 24 24"><ellipse cx="11" cy="10.500" rx="10.500" ry="10" fill="#c9dcf0" stroke="#5b8cc4" stroke-width="1.200"/><path d="M0.500,10.500 h21 M2.500,5 h17 M2.500,16 h17 M11,0.500 v20" stroke="#8fb4dc" stroke-width="1"/><ellipse cx="11" cy="10.500" rx="5" ry="10" fill="none" stroke="#8fb4dc" stroke-width="1"/><path d="M3,6 l4,-2.500 l2,2 l-1,3 l-3,1z M12,4 l4,-1 l3,3 l-2,2 l-3,-0.500z M8,12 l3,-1 l1,4 l-2,3z M15,11 l3,1 l-1,4 l-2,-1z" fill="#2f5f9a"/><rect x="14" y="14.5" width="10" height="10" rx="2" fill="#5a9b4e" stroke="#3f7a36" stroke-width="0.8"/><path d="M16,19.5 h6 M19,16.5 v6" stroke="#fff" stroke-width="2.2"/></svg>
<svg class="ic" style="left:17px;top:490px" viewBox="0 0 24 24"><ellipse cx="11" cy="10.500" rx="10.500" ry="10" fill="#3c6ca4" stroke="#16304f" stroke-width="1.200"/><path d="M0.500,10.500 h21 M2.500,5 h17 M2.500,16 h17 M11,0.500 v20" stroke="#d6e4f4" stroke-width="1"/><ellipse cx="11" cy="10.500" rx="5" ry="10" fill="none" stroke="#d6e4f4" stroke-width="1"/><path d="M0.500,8 h21 M0.500,13 h21" stroke="#16304f" stroke-width="2.200"/><rect x="14" y="14.5" width="10" height="10" rx="2" fill="#5a9b4e" stroke="#3f7a36" stroke-width="0.8"/><path d="M16,19.5 h6 M19,16.5 v6" stroke="#fff" stroke-width="2.2"/></svg>
<svg class="ic" style="left:17px;top:524px" viewBox="0 0 24 24"><ellipse cx="11" cy="10.500" rx="10.500" ry="10" fill="#d6e4f4" stroke="#5b8cc4" stroke-width="1.200"/><path d="M0.500,10.500 h21 M2.500,5 h17 M2.500,16 h17 M11,0.500 v20" stroke="#8fb4dc" stroke-width="1"/><ellipse cx="11" cy="10.500" rx="5" ry="10" fill="none" stroke="#8fb4dc" stroke-width="1"/><path d="M4.500,5.500 L9,16.500 L13.500,6 L17.500,5.500" fill="none" stroke="#16304f" stroke-width="1.300"/><circle cx="4.5" cy="5.5" r="1.300" fill="#fff" stroke="#16304f" stroke-width="0.900"/><circle cx="9" cy="16.5" r="1.300" fill="#fff" stroke="#16304f" stroke-width="0.900"/><circle cx="13.5" cy="6" r="1.300" fill="#fff" stroke="#16304f" stroke-width="0.900"/><circle cx="17.5" cy="5.5" r="1.300" fill="#fff" stroke="#16304f" stroke-width="0.900"/><rect x="14" y="14.5" width="10" height="10" rx="2" fill="#5a9b4e" stroke="#3f7a36" stroke-width="0.8"/><path d="M16,19.5 h6 M19,16.5 v6" stroke="#fff" stroke-width="2.2"/></svg>
<svg class="ic" style="left:17px;top:558px" viewBox="0 0 24 24"><g transform="translate(-2.500 -2.500) scale(1.300)"><path d="M9.500,2.500 a4.800,4.800 0 1 1 -0.500,9.500 q2.500,0 2.500,-1.500 q-1,4.500 -6.500,6.500 l-0.500,-1.200 q5,-2.500 5,-5 q-4.500,-1 -4.500,-4.500 q0,-3.800 4.500,-3.800z" fill="#5b8cc4" stroke="#2f5f9a" stroke-width="0.700"/></g><rect x="15" y="14.5" width="10" height="10" rx="2" fill="#5a9b4e" stroke="#3f7a36" stroke-width="0.8"/><path d="M17,19.5 h6 M20,16.5 v6" stroke="#fff" stroke-width="2.2"/></svg>
<div class="more" style="left:26px;top:619px;transform:rotate(90deg);font-size:15px;font-weight:bold">»</div>
<div class="abs" style="left:53px;top:170px;width:2px;height:462px;border-left:1px solid #f4f4f6"></div>
<div class="hh" style="left:58px;top:175px;width:108px"></div><div class="hh" style="left:209px;top:175px;width:106px"></div>
<span class="lbl" style="left:173px;top:172px;font-size:10px">Layers</span>
<div class="dockbtn" style="left:319px;top:172px"></div><svg class="abs" style="left:319px;top:172px" width="13" height="13" viewBox="0 0 13 13"><path d="M5.5,3.5h5v4h-5z M3.5,6.5h4v4h-4z" fill="#fff" stroke="#000" stroke-width="1"/><path d="M5,3.5h6 M3,6.5h5" stroke="#000" stroke-width="2"/></svg>
<div class="dockbtn" style="left:335px;top:172px"></div><svg class="abs" style="left:335px;top:172px" width="13" height="13" viewBox="0 0 13 13"><path d="M3.5,3.5 L9.5,9.5 M9.5,3.5 L3.5,9.5" stroke="#000" stroke-width="1.6"/></svg>
<div id="tree" class="abs"></div><div id="rowsel" class="abs"></div><div id="split" class="abs"></div>
<svg class="abs" style="left:56px;top:189px" width="60" height="70" viewBox="56 189 60 70"><path d="M66.5,190 V231 M71,199.5 H78 M71,231.5 H78 M87.500,206 V215.500 H97 M87.500,238 V247.500 H97" stroke="#9a99a2" stroke-width="1" stroke-dasharray="1 1" fill="none"/></svg>
<div class="exp" style="left:62px;top:195px"></div>
<div class="cb" style="left:80px;top:193px"></div><svg class="abs" style="left:80px;top:193px" width="13" height="13" viewBox="0 0 13 13"><path d="M3,3 L10,10 M10,3 L3,10" stroke="#000" stroke-width="2.6"/></svg>
<svg class="abs" style="left:98px;top:192px" width="18" height="13" viewBox="0 0 18 13"><path d="M1.500,4 Q2,1 5.500,1.500 Q9,3.500 12.500,1.500 Q16.500,0.500 16.500,4 Q15.500,7 16.500,9.500 Q16,12 12.500,11 Q9,9 5.500,11 Q1.500,12.500 1.500,9 Q2.500,6.500 1.500,4z" fill="#dcdcdc" stroke="#999" stroke-width="1"/></svg>
<span class="lname" style="left:120px;top:193px;">buildings</span>
<div class="sw" style="left:100px;top:207px;background:#ff5500"></div>
<div class="exp" style="left:62px;top:227px"></div>
<div class="cb" style="left:80px;top:225px"></div><svg class="abs" style="left:80px;top:225px" width="13" height="13" viewBox="0 0 13 13"><path d="M3,3 L10,10 M10,3 L3,10" stroke="#000" stroke-width="2.6"/></svg>
<svg class="abs" style="left:98px;top:224px" width="18" height="13" viewBox="0 0 18 13"><path d="M1.500,4 Q2,1 5.500,1.500 Q9,3.500 12.500,1.500 Q16.500,0.500 16.500,4 Q15.500,7 16.500,9.500 Q16,12 12.500,11 Q9,9 5.500,11 Q1.500,12.500 1.500,9 Q2.500,6.500 1.500,4z" fill="#dcdcdc" stroke="#999" stroke-width="1"/></svg>
<span class="lname" style="left:120px;top:225px;text-decoration:underline">parcels</span>
<div class="sw" style="left:100px;top:239px;background:#55ff00"></div>
<div id="mapframe" class="abs"></div>
<svg id="map" width="808" height="461" viewBox="357 171 808 461" shape-rendering="auto" stroke-width="1.25" stroke-linejoin="miter">
<rect x="357" y="171" width="809" height="461" fill="#fff"/>
<polygon points="656.5,326.5 741.7,284.0 777.5,270.5 776.0,267.0 820.5,243.5 866.7,241.0 1047.8,194.4 1043.3,183.0 1095.0,170.0 1170.0,170.0 1170.0,640.0 814.5,640.0" fill="#55ff00" stroke="#000"/>
<polygon points="656.5,326.5 741.7,284.0 778.9,361.1 806.3,348.1 824.4,429.3 775.8,452.7 743.3,388.2 698.6,410.0" fill="#ffff00" stroke="#000"/>
<polygon points="725.6,397.5 743.3,388.2 775.8,452.7 756.7,461.8" fill="#ffff00" stroke="#000"/>
<polygon points="741.7,284.0 777.5,270.5 800.0,314.2 765.8,332.5" fill="#ffff00" stroke="#000"/>
<polygon points="777.5,270.5 776.0,267.0 820.5,243.5 825.5,244.5 849.4,291.5 800.0,314.2" fill="#ffff00" stroke="#000"/>
<polygon points="765.8,332.5 849.4,291.5 863.6,319.6 778.9,361.1" fill="#ffff00" stroke="#000"/>
<polygon points="806.3,348.1 837.8,332.5 872.0,404.5 824.4,429.3" fill="#ffff00" stroke="#000"/>
<polyline points="731.1,474.4 900.5,392.3" fill="none" stroke="#000"/>
<polyline points="782.2,576.7 950.9,491.5" fill="none" stroke="#000"/>
<polyline points="799.0,609.3 968.1,525.5" fill="none" stroke="#000"/>
<polyline points="878.5,453.2 921.0,432.7" fill="none" stroke="#000"/>
<polyline points="878.5,453.2 908.0,513.0" fill="none" stroke="#000"/>
<polyline points="837.3,475.2 865.8,534.0" fill="none" stroke="#000"/>
<polyline points="815.7,537.0 824.5,555.0" fill="none" stroke="#000"/>
<polyline points="937.8,222.7 970.0,287.8" fill="none" stroke="#000"/>
<polyline points="907.1,320.2 1003.3,271.8" fill="none" stroke="#000"/>
<polyline points="974.4,213.3 1081.5,425.0" fill="none" stroke="#000"/>
<polyline points="1012.2,203.3 1115.0,407.8" fill="none" stroke="#000"/>
<polyline points="1043.3,183.0 1102.2,297.8" fill="none" stroke="#000"/>
<polyline points="1102.2,297.8 1165.0,266.0" fill="none" stroke="#000"/>
<polyline points="1122.8,170.0 1166.0,255.6" fill="none" stroke="#000"/>
<polyline points="1027.8,316.5 1094.0,284.0" fill="none" stroke="#000"/>
<polyline points="982.2,321.8 1018.9,304.4" fill="none" stroke="#000"/>
<polyline points="1005.6,353.3 1035.6,337.8" fill="none" stroke="#000"/>
<polyline points="995.6,361.1 1038.4,445.4" fill="none" stroke="#000"/>
<polyline points="961.8,427.4 1014.4,402.3" fill="none" stroke="#000"/>
<polyline points="985.6,474.0 1166.0,382.2" fill="none" stroke="#000"/>
<polyline points="1002.5,507.0 1166.0,424.0" fill="none" stroke="#000"/>
<polyline points="1123.1,507.8 1166.0,593.0" fill="none" stroke="#000"/>
<polyline points="1147.4,219.7 1166.0,211.0" fill="none" stroke="#000"/>
<polyline points="1137.9,197.8 1166.0,190.0" fill="none" stroke="#000"/>
<polyline points="923.5,353.0 961.6,334.0" fill="none" stroke="#000"/>
<polyline points="940.8,386.6 969.8,372.1" fill="none" stroke="#000"/>
<polyline points="825.5,244.5 1026.3,640.0" fill="none" stroke="#000"/>
<polyline points="866.7,241.0 1070.4,640.0" fill="none" stroke="#000"/>
<path d="M872.2,250 Q879.5,247 878.4,238.4" fill="none" stroke="#000"/>
<polygon points="752.5,279.5 777.5,270.5 787.5,292.5 775.8,297.5 776.7,303.3 771.3,305.3 769.7,300.8 761.7,303.3" fill="#ff5500" stroke="#000"/>
<polygon points="778.3,267.5 820.0,244.2 825.8,245.0 840.5,274.0 836.7,279.2 830.0,280.8 825.0,280.0 820.8,282.5 813.3,270.0 785.8,283.3" fill="#ff5500" stroke="#000"/>
<polygon points="830.0,302.5 849.6,292.0 863.6,319.6 834.4,333.8 830.0,323.3 836.7,319.5" fill="#ff5500" stroke="#000"/>
<polygon points="838.0,332.0 863.6,319.6 900.4,392.0 872.0,404.5" fill="#ff5500" stroke="#000"/>
<polygon points="848.4,362.5 852.5,360.8 857.5,372.5 853.5,374.5" fill="#ff5500" stroke="#000"/>
<polygon points="806.3,348.1 820.8,341.0 856.2,412.5 825.3,427.5 808.7,394.0 814.5,390.7 812.6,383.5 801.8,361.7 809.9,357.2" fill="#ff5500" stroke="#000"/>
<polygon points="746.7,404.4 753.5,402.0 754.4,404.4 765.6,399.6 787.8,447.0 775.8,452.7 762.2,426.7 757.8,428.9" fill="#ff5500" stroke="#000"/>
<polygon points="698.6,410.0 725.6,397.5 756.7,461.8 731.0,474.4" fill="#ff5500" stroke="#000"/>
<polygon points="773.3,481.1 845.2,442.8 835.5,424.0 856.0,413.5 878.5,453.2 795.6,496.7 822.0,548.5 811.3,553.3" fill="#ff5500" stroke="#000"/>
<polygon points="864.4,423.0 905.7,402.5 914.8,420.5 873.5,440.8" fill="#ff5500" stroke="#000"/>
<polygon points="874.6,472.2 884.4,467.3 898.2,488.9 928.6,474.2 940.4,496.8 824.5,555.0 815.7,537.0 846.1,521.3 843.2,512.4 852.0,507.5 858.9,500.7 863.8,505.6 885.4,495.8" fill="#ff5500" stroke="#000"/>
<polygon points="799.0,609.3 871.1,575.6 873.3,580.0 884.4,574.4 886.0,577.0 900.0,572.2 907.2,586.9 898.4,591.7 899.2,595.7 886.7,603.3 885.0,601.0 865.6,611.1 867.8,615.6 855.6,621.1 853.3,618.9 840.0,625.6 847.0,640.0 815.0,640.0" fill="#ff5500" stroke="#000"/>
<polygon points="901.6,559.6 914.4,553.2 945.7,611.4 998.5,585.3 1026.3,640.0 997.5,640.0 982.5,610.9 924.0,640.0 905.0,640.0 896.0,620.5 924.0,605.3" fill="#ff5500" stroke="#000"/>
<polygon points="926.4,574.8 979.3,548.9 986.5,563.6 934.5,590.5" fill="#ff5500" stroke="#000"/>
<polygon points="878.4,238.4 920.0,227.8 924.4,247.8 905.6,254.0 901.1,261.1 906.7,274.4 914.4,271.8 923.3,291.1 898.9,304.0 872.2,250.0 876.7,245.6" fill="#ff5500" stroke="#000"/>
<polygon points="950.4,219.3 974.4,213.3 984.4,233.3 955.6,244.0" fill="#ff5500" stroke="#000"/>
<polygon points="974.4,213.3 1047.8,194.4 1064.4,227.3 1051.1,234.9 1042.2,220.0 1025.6,228.2 1040.0,262.2 1028.9,267.8 1010.0,230.0 984.4,233.3" fill="#ff5500" stroke="#000"/>
<polygon points="1126.2,176.6 1146.8,170.0 1170.0,170.0 1170.0,189.3 1137.9,197.8" fill="#ff5500" stroke="#000"/>
<polygon points="911.8,328.5 919.9,324.0 923.5,322.2 929.0,332.2 948.9,321.8 948.9,319.5 975.2,306.8 982.5,322.2 961.6,334.0 965.3,344.0 950.8,353.0 956.2,363.9 999.7,343.6 1005.2,353.0 969.8,372.1 974.3,383.9 973.0,385.0 982.5,402.9 957.1,415.5 912.1,330.0" fill="#ff5500" stroke="#000"/>
<polygon points="1039.6,340.0 1045.1,337.6 1047.8,343.1 1050.5,342.2 1054.1,351.2 1059.6,349.4 1081.3,394.7 1056.8,407.1 1042.3,377.5 1046.0,374.8 1043.2,368.4 1052.3,365.7 1047.8,354.8" fill="#ff5500" stroke="#000"/>
<polygon points="1094.2,313.0 1104.1,307.6 1147.3,390.3 1136.5,395.8" fill="#ff5500" stroke="#000"/>
<polygon points="1109.6,309.7 1122.7,304.3 1164.8,382.0 1147.3,390.3 1107.4,308.6" fill="#ff5500" stroke="#000"/>
<polygon points="1101.9,297.7 1127.1,285.7 1131.5,295.5 1117.2,303.0 1109.6,309.7 1107.4,309.7" fill="#ff5500" stroke="#000"/>
<polygon points="1127.1,285.7 1170.0,264.0 1170.0,338.0 1146.8,290.0 1131.5,295.5" fill="#ff5500" stroke="#000"/>
<polygon points="1158.8,355.7 1170.0,350.0 1170.0,380.0" fill="#ff5500" stroke="#000"/>
<polygon points="961.8,427.4 984.5,417.9 996.5,438.2 1001.3,436.5 1012.0,458.5 990.5,471.7 984.1,471.0" fill="#ff5500" stroke="#000"/>
<polygon points="1012.0,390.3 1024.0,384.4 1039.6,416.7 1047.9,413.1 1057.5,434.6 1038.4,445.4" fill="#ff5500" stroke="#000"/>
<polygon points="1009.7,412.6 1013.0,411.0 1014.5,415.0 1020.4,413.1 1032.4,435.8 1022.8,439.9" fill="#ff5500" stroke="#000"/>
<polygon points="1020.4,444.2 1033.6,438.2 1038.4,445.4 1024.0,452.6" fill="#ff5500" stroke="#000"/>
<polygon points="1002.6,507.2 1046.5,485.9 1058.8,509.5 1041.8,518.9 1088.9,614.3 1107.8,606.1 1170.0,574.0 1170.0,588.5 1113.7,619.1 1107.8,623.8 1116.0,640.0 1070.4,640.0" fill="#ff5500" stroke="#000"/>
<polygon points="1147.8,555.4 1170.0,544.5 1170.0,574.0 1158.4,580.2" fill="#ff5500" stroke="#000"/>
<polygon points="1098.2,458.5 1170.0,422.0 1170.0,510.0 1148.5,465.7 1123.3,480.1 1129.3,493.2 1136.5,489.7 1140.8,498.9 1123.1,507.8" fill="#ff5500" stroke="#000"/>
<polyline points="806.3,348.1 841.7,419.5" fill="none" stroke="#000"/>
<polyline points="812.6,383.5 820.8,379.8" fill="none" stroke="#000"/>
<polyline points="878.5,453.2 908.0,513.0" fill="none" stroke="#000"/>
<polyline points="837.3,475.2 865.8,534.0" fill="none" stroke="#000"/>
<polyline points="743.3,388.2 762.2,426.7" fill="none" stroke="#000"/>
<polyline points="945.7,611.4 890.0,640.0" fill="none" stroke="#000"/>
<polyline points="912.8,581.2 926.4,574.8" fill="none" stroke="#000"/>
<polyline points="920.8,596.5 934.5,590.5" fill="none" stroke="#000"/>
<polyline points="914.4,553.2 945.7,611.4" fill="none" stroke="#000"/>
<polyline points="1012.2,203.3 1025.6,228.2" fill="none" stroke="#000"/>
<polyline points="1026.0,554.6 1053.6,541.7" fill="none" stroke="#000"/>
<polyline points="1107.8,606.1 1113.7,619.1" fill="none" stroke="#000"/>
<polyline points="1152.3,272.5 1157.7,283.5 1166.0,279.5" fill="none" stroke="#000"/>
<polyline points="1153.2,429.8 1166.0,445.0" fill="none" stroke="#000"/>
<polyline points="923.5,353.0 961.6,334.0" fill="none" stroke="#000"/>
<polyline points="940.8,386.6 969.8,372.1" fill="none" stroke="#000"/>
<polyline points="1038.0,337.8 1075.0,410.5" fill="none" stroke="#000"/>
<polyline points="978.9,353.4 984.3,363.9" fill="none" stroke="#000"/>
<polyline points="920.5,323.5 925.0,332.5" fill="none" stroke="#000"/>
<polyline points="1043.2,368.4 1055.0,373.0 1046.0,374.8" fill="none" stroke="#000"/>
</svg>
<div class="sbtn" style="left:429px;width:23px"></div>
<svg class="ic" style="left:429px;top:634px" viewBox="0 0 24 24"><path d="M7,6 Q7,3 10,3 Q13,3 13,6 L14.500,12 Q18,13 17,17 Q15,21 11,20 Q6,19 6,14z" fill="#f4f4f4" stroke="#222" stroke-width="1.300"/><circle cx="11" cy="15" r="3.200" fill="none" stroke="#222" stroke-width="1.300"/><path d="M8,5 L12.500,13 M15,4 l2,-1.500 M16.500,7 h2.500 M14,2.500 v-1.500" stroke="#222" stroke-width="1.100"/></svg>
<div class="sframe" style="left:454px;width:66px;padding-left:4px">Coordinate:</div>
<div class="sedit" style="left:524px;width:302px;text-align:center;padding-left:0px">655692.3,238295.2</div>
<div class="sframe" style="left:830px;width:36px;padding-left:4px">Scale</div>
<div class="sedit" style="left:870px;width:88px;padding-left:5px">1:1 519</div><div class="abs" style="left:942px;top:637px;width:15px;height:18px;background:linear-gradient(#f3f3f5,#d8d7dd);border-left:1px solid #c9c8ce;border-radius:0 2px 2px 0"></div><div class="arr" style="left:946px;top:645px"></div>
<div class="sbtn" style="left:963px;width:23px"></div>
<svg class="ic" style="left:963px;top:634px" viewBox="0 0 24 24"><path d="M21,2 Q14,8 12,15 L8,21 L11.500,21.500 Q17,14 21,2z" fill="#c9c9c9" stroke="#777" stroke-width="1"/><path d="M5,21 q3,-3 7,-2" stroke="#666" stroke-width="1.500" fill="none"/><circle cx="9" cy="8.500" r="5.500" fill="#f6e6e6" stroke="#d8242c" stroke-width="1.800"/><path d="M5.200,12.300 L12.800,4.700" stroke="#d8242c" stroke-width="1.800"/></svg>
<div class="sframe" style="left:988px;width:62px"></div><div class="cb" style="left:991px;top:639px"></div><svg class="abs" style="left:991px;top:639px" width="13" height="13" viewBox="0 0 13 13"><path d="M3,3 L10,10 M10,3 L3,10" stroke="#000" stroke-width="2.6"/></svg><span class="lbl" style="left:1007px;top:640px">Render</span>
<div class="sframe" style="left:1053px;width:68px;padding-left:4px;color:#8a8a8e;letter-spacing:-0.4px">EPSG:23700</div>
<div class="sbtn" style="left:1124px;width:23px"></div>
<svg class="ic" style="left:1124px;top:634px" viewBox="0 0 24 24"><circle cx="12" cy="12" r="8.500" fill="#c4c4c4" stroke="#8a8a8a" stroke-width="1.400"/><ellipse cx="12" cy="12" rx="4" ry="8.500" fill="none" stroke="#8a8a8a" stroke-width="1.200"/><path d="M3.500,12 h17 M12,3.500 v17" stroke="#8a8a8a" stroke-width="1.200"/><circle cx="12" cy="12" r="3" fill="#e6e6e6" stroke="#8a8a8a" stroke-width="1"/></svg>
<svg class="abs" style="left:1155px;top:646px" width="12" height="12" viewBox="0 0 12 12"><path d="M11,1 L1,11 M11,5 L5,11 M11,9 L9,11" stroke="#b4b3bb" stroke-width="1.3"/><path d="M12,1 L2,11 M12,5 L6,11 M12,9 L10,11" stroke="#fff" stroke-width="1"/></svg>
<div id="dlg" class="abs"><div id="dlgt" class="abs"><div class="abs t">Batch Plotting</div>
<div class="tb" style="left:247px;background:linear-gradient(135deg,#fafaff,#b9b9d2 70%,#a5a5c4);box-shadow:0 0 0 1px #8585a8"><span class="abs" style="left:5px;top:1px;font:bold 15px 'Liberation Sans',sans-serif;color:#2a2a55;line-height:17px">?</span></div>
<div class="tb" style="left:270px;background:linear-gradient(135deg,#e9897a,#c9392f 70%,#b5281f);box-shadow:0 0 0 1px #a06a6a"><svg class="abs" style="left:3px;top:3px" width="13" height="13" viewBox="0 0 13 13"><path d="M2,2 L11,11 M11,2 L2,11" stroke="#fff" stroke-width="2.3" stroke-linecap="round"/></svg></div>
</div><div id="dlgb" class="abs"><div id="dlgi" class="abs"></div></div></div>
<svg class="abs" style="left:271px;top:203px" width="17" height="19" viewBox="2 1 19 22"><path d="M6,5 Q10,2 14,6 L17,4 L19,9 L17,19 Q14,22 10,20 Q9,21 7,19 Q4,14 5,9z" fill="#dff06a" stroke="#c4d84a" stroke-width="0.800"/><path d="M8.500,11 L11,16 L17,5.500" fill="none" stroke="#1f5f1f" stroke-width="2"/><path d="M14.500,3.500 l4.500,-0.500 l-1,4.500z" fill="#1f7f1f"/><path d="M3.500,17 l3.500,-1.500 l-0.500,3z" fill="#1f3f1f"/><path d="M6,17.500 L10,15" stroke="#111" stroke-width="1.200"/></svg>
<span class="lbl" style="left:279px;top:241px">Polygon layers:</span>
<div class="combo" style="left:390px;top:237px;width:161px;height:22px"><span class="lbl" style="left:4px;top:4px">parcels</span><div class="abs" style="left:143px;top:1px;width:1px;height:18px;background:#c4c3ca"></div></div><div class="arr" style="left:538px;top:246px"></div>
<span class="lbl" style="left:279px;top:281px">Available templates:</span>
<div class="btn" style="left:440px;top:277px;width:111px;height:21px;line-height:19px">Change Dir ...</div>
<div class="sunk" style="left:280px;top:307px;width:271px;height:101px"><div class="abs" style="left:1px;top:1px;width:267px;height:13px;background:#e0dfe3"></div><span class="lbl" style="left:3px;top:1px">test.qpt</span></div>
<span class="lbl" style="left:279px;top:421px">Map Scale:</span><span class="lbl" style="left:380px;top:421px">1:</span>
<div class="combo" style="left:390px;top:417px;width:81px;height:22px"><div class="abs" style="left:1px;top:1px;width:62px;height:18px;background:#fff;border-radius:2px 0 0 2px"></div><span class="lbl" style="left:4px;top:5px">1000</span><div class="abs" style="left:63px;top:1px;width:1px;height:18px;background:#c4c3ca"></div></div><div class="arr" style="left:458px;top:426px"></div>
<div class="abs" style="left:280px;top:476px;width:271px;height:102px;border:1px solid #b9b8c0;border-radius:3px;background:#e3e2e6;box-shadow:inset 1px 1px 0 #f0f0f3"></div>
<div class="tab" style="left:281px;top:460px;width:57px;height:17px;background:linear-gradient(#f0eff2,#d5d4da);border-bottom:1px solid #b9b8c0"></div><span class="lbl" style="left:292px;top:462px">To PDF</span>
<div class="tab" style="left:337px;top:460px;width:71px;height:17px;background:linear-gradient(#f0eff2,#d5d4da);border-bottom:1px solid #b9b8c0"></div><span class="lbl" style="left:349px;top:462px">To Printer</span>
<div class="tab" style="left:407px;top:457px;width:110px;height:20px;background:#e3e2e6"></div><span class="lbl" style="left:419px;top:461px;letter-spacing:-0.2px">To Composer View</span>
<span class="lbl" style="left:291px;top:489px">Composer name:</span>
<div class="abs" style="left:293px;top:508px;width:240px;height:20px;border:1px solid #8e8fa0;background:#fff;border-radius:2px"><span class="lbl" style="left:3px;top:4px">test</span></div>
<span class="lbl" style="left:291px;top:532px;font-size:10px;letter-spacing:-0.12px">If empty name will be genrated automatically.</span>
<div class="btn" style="left:320px;top:587px;width:81px;height:23px;line-height:21px">Plot</div>
<div class="btn" style="left:430px;top:587px;width:81px;height:23px;line-height:21px">Close</div>
</body></html>
